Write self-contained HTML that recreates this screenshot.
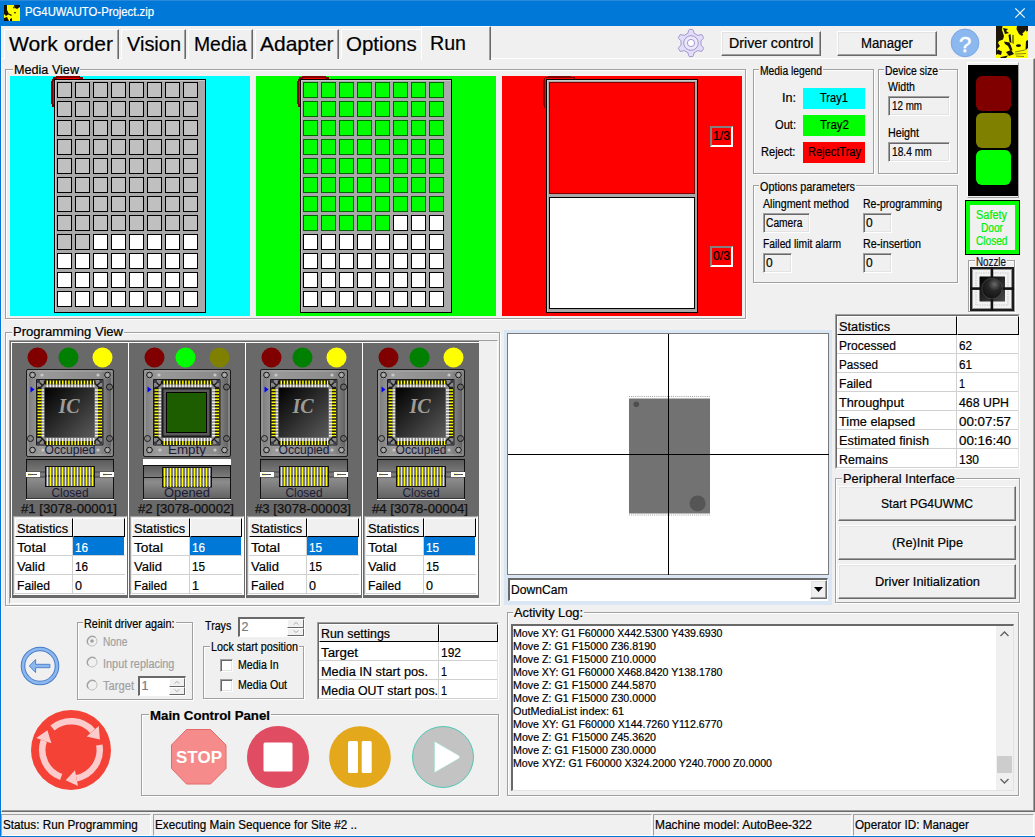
<!DOCTYPE html><html><head><meta charset="utf-8"><style>
html,body{margin:0;padding:0;}
body{width:1035px;height:837px;overflow:hidden;position:relative;background:#f0f0f0;font-family:"Liberation Sans",sans-serif;}
body>div{position:absolute;-webkit-text-stroke:0.2px currentColor;}
</style></head><body>
<div style="left:0px;top:0px;width:1035px;height:26px;background:#0078d7"></div>
<div style="left:0px;top:26px;width:1px;height:811px;background:#0078d7"></div>
<div style="left:0px;top:836px;width:1035px;height:1px;background:#0078d7"></div>
<svg style="position:absolute;left:4px;top:5px;" width="16" height="16" viewBox="0 0 16 16"><rect width="16" height="16" fill="#ffff00"/><path d="M0 0 L3 0 L3 5 L5 9 L2 11 L0 9Z M10 0 L16 0 L16 2 L13 4 L11 3Z M0 13 L3 12 L5 16 L0 16Z M4 8 L8 10 L7 11 L4 9Z M10 7 L12 7 L11 9Z M6 14 L8 13 L8 16 L6 16Z M9 2 L11 1 L10 4Z" fill="#1a1000"/></svg>
<div style="left:25.00px;top:5.44px;font-size:12px;line-height:14.40px;color:#fff;font-weight:400;white-space:nowrap;transform-origin:0 0;transform:scaleX(0.9437);">PG4UWAUTO-Project.zip</div>
<svg style="position:absolute;left:1013px;top:6px;" width="14" height="14" viewBox="0 0 14 14"><path d="M2.3 2.3 L11.7 11.7 M11.7 2.3 L2.3 11.7" stroke="#fff" stroke-width="1.2"/></svg>
<div style="left:0px;top:0px;width:1035px;height:1px;background:#2a88da"></div>
<div style="left:1px;top:58px;width:1034px;height:754px;background:#f0f0f0;border-top:1px solid #fff;border-left:1px solid #fff;border-right:1px solid #696969;border-bottom:1px solid #696969;box-sizing:border-box;box-shadow:inset -1px -1px 0 #a0a0a0"></div>
<div style="left:4px;top:29px;width:115px;height:30px;background:#f0f0f0;border-top:1px solid #fff;border-left:1px solid #fff;border-right:1px solid #696969;box-sizing:border-box;box-shadow:inset -1px 0 0 #a0a0a0"></div>
<div style="left:9.00px;top:31.14px;font-size:21px;line-height:25.20px;color:#000;font-weight:400;white-space:nowrap;transform-origin:0 0;transform:scaleX(1.0052);">Work order</div>
<div style="left:121px;top:29px;width:65px;height:30px;background:#f0f0f0;border-top:1px solid #fff;border-left:1px solid #fff;border-right:1px solid #696969;box-sizing:border-box;box-shadow:inset -1px 0 0 #a0a0a0"></div>
<div style="left:126.70px;top:31.14px;font-size:21px;line-height:25.20px;color:#000;font-weight:400;white-space:nowrap;transform-origin:0 0;transform:scaleX(0.9505);">Vision</div>
<div style="left:188px;top:29px;width:65px;height:30px;background:#f0f0f0;border-top:1px solid #fff;border-left:1px solid #fff;border-right:1px solid #696969;box-sizing:border-box;box-shadow:inset -1px 0 0 #a0a0a0"></div>
<div style="left:194.00px;top:31.14px;font-size:21px;line-height:25.20px;color:#000;font-weight:400;white-space:nowrap;transform-origin:0 0;transform:scaleX(0.9215);">Media</div>
<div style="left:255px;top:29px;width:84px;height:30px;background:#f0f0f0;border-top:1px solid #fff;border-left:1px solid #fff;border-right:1px solid #696969;box-sizing:border-box;box-shadow:inset -1px 0 0 #a0a0a0"></div>
<div style="left:260.00px;top:31.14px;font-size:21px;line-height:25.20px;color:#000;font-weight:400;white-space:nowrap;transform-origin:0 0;">Adapter</div>
<div style="left:341px;top:29px;width:82px;height:30px;background:#f0f0f0;border-top:1px solid #fff;border-left:1px solid #fff;box-sizing:border-box"></div>
<div style="left:346.00px;top:31.14px;font-size:21px;line-height:25.20px;color:#000;font-weight:400;white-space:nowrap;transform-origin:0 0;transform:scaleX(0.9770);">Options</div>
<div style="left:421px;top:26px;width:70px;height:34px;background:#f0f0f0;border-top:1px solid #fff;border-left:1px solid #fff;border-right:1px solid #696969;box-sizing:border-box;box-shadow:inset -1px 0 0 #a0a0a0"></div>
<div style="left:429.60px;top:29.64px;font-size:21px;line-height:25.20px;color:#000;font-weight:400;white-space:nowrap;transform-origin:0 0;transform:scaleX(0.9345);">Run</div>
<svg style="position:absolute;left:676px;top:28px;" width="30" height="30" viewBox="0 0 30 30"><path d="M11.85 5.30 L12.74 2.20 L13.33 1.40 L16.67 1.40 L17.26 2.20 L18.15 5.30 L21.83 7.42 L24.96 6.64 L25.94 6.76 L27.61 9.65 L27.22 10.55 L24.98 12.88 L24.98 17.12 L27.22 19.45 L27.61 20.35 L25.94 23.24 L24.96 23.36 L21.83 22.58 L18.15 24.70 L17.26 27.80 L16.67 28.60 L13.33 28.60 L12.74 27.80 L11.85 24.70 L8.17 22.58 L5.04 23.36 L4.06 23.24 L2.39 20.35 L2.78 19.45 L5.02 17.12 L5.02 12.88 L2.78 10.55 L2.39 9.65 L4.06 6.76 L5.04 6.64 L8.17 7.42Z" fill="#e2ddf8" stroke="#9c8cc8" stroke-width="0.9" stroke-linejoin="round"/><circle cx="15" cy="15" r="7.3" fill="#ece9fb" stroke="#9c8cc8" stroke-width="0.9"/><circle cx="15" cy="15" r="3.6" fill="#fff" stroke="#9c8cc8" stroke-width="0.9"/></svg>
<div style="left:721px;top:31px;width:100px;height:25px;background:#f0f0f0;border-top:1px solid #fff;border-left:1px solid #fff;border-right:1px solid #696969;border-bottom:1px solid #696969;box-sizing:border-box;box-shadow:inset -1px -1px 0 #a0a0a0, inset 1px 1px 0 #e3e3e3"></div>
<div style="left:728.75px;top:34.76px;font-size:14px;line-height:16.80px;color:#000;font-weight:400;white-space:nowrap;transform-origin:0 0;transform:scaleX(1.0152);">Driver control</div>
<div style="left:837px;top:31px;width:100px;height:25px;background:#f0f0f0;border-top:1px solid #fff;border-left:1px solid #fff;border-right:1px solid #696969;border-bottom:1px solid #696969;box-sizing:border-box;box-shadow:inset -1px -1px 0 #a0a0a0, inset 1px 1px 0 #e3e3e3"></div>
<div style="left:861.00px;top:34.76px;font-size:14px;line-height:16.80px;color:#000;font-weight:400;white-space:nowrap;transform-origin:0 0;transform:scaleX(0.9412);">Manager</div>
<svg style="position:absolute;left:950px;top:28px;" width="30" height="30" viewBox="0 0 30 30"><circle cx="15" cy="14.9" r="13.9" fill="#8cb8f0" stroke="#6f9ee0" stroke-width="0.8"/><text x="15.2" y="23.5" font-family="Liberation Sans" font-size="22" fill="#fff" text-anchor="middle" stroke="#fff" stroke-width="0.5">?</text></svg>
<svg style="position:absolute;left:996px;top:26px;" width="32" height="32" viewBox="0 0 32 32"><rect width="32" height="32" fill="#ffff00"/><path d="M0 0 L6.5 0 L6 4 L8 10 L7 13.5 L3 15 L2 17 L4 20 L1 23 L3 27 L0 29Z" fill="#1e1608"/><path d="M21 0 L32 0 L32 5 L29 6 L26 10 L23 8 L20.5 3Z" fill="#1e1608"/><path d="M26 8 L30 4 L31 9Z" fill="#ffff00"/><path d="M7 2 L12 3 L10 5 L13 7 L9 8 L8 5Z" fill="#111"/><path d="M12.5 9 L14.5 8 L15.5 17 L13.5 16Z M16.5 9 L17.5 9 L17.5 18 L16.5 17Z" fill="#111"/><path d="M8 15.5 L13.5 16.5 L15 20 L16.5 24 L14.5 25 L12 20 L9 18Z" fill="#111"/><ellipse cx="22.5" cy="19.6" rx="2.6" ry="1.4" fill="#111"/><path d="M30 15 L32 14 L32 22 L29.5 24Z" fill="#111"/><path d="M10 26 L15 24 L18 28 L13 30Z M2 23.5 L6 25.5 L5 29 L1 28Z M5 31 L12 29.5 L10 32 L4 32Z" fill="#111"/><path d="M19 26 L29 24 M19 28 L30 27.5 M20 30 L28 30.5" stroke="#6a6a20" stroke-width="0.8"/></svg>
<div style="left:6px;top:70px;width:741px;height:250px;border:1px solid #fff;box-sizing:border-box"></div>
<div style="left:5px;top:69px;width:741px;height:250px;border:1px solid #a0a0a0;box-sizing:border-box"></div>
<div style="left:12.5px;top:66px;width:67.0px;height:7px;background:#f0f0f0"></div>
<div style="left:13.50px;top:63.44px;font-size:12px;line-height:14.40px;color:#000;font-weight:400;white-space:nowrap;transform-origin:0 0;transform:scaleX(1.0517);">Media View</div>
<div style="left:10px;top:76px;width:240px;height:240px;background:#00ffff"></div>
<div style="left:256px;top:76px;width:240px;height:240px;background:#00ff00"></div>
<div style="left:502px;top:76px;width:240px;height:240px;background:#ff0000"></div>
<svg style="position:absolute;left:50px;top:75px;" width="34" height="36" viewBox="0 0 34 36"><g shape-rendering="crispEdges"><rect x="6" y="1" width="24" height="1" fill="#800000"/><rect x="3" y="2" width="30" height="2" fill="#800000"/><rect x="7" y="3" width="22" height="1" fill="#ff0000"/><rect x="1" y="6" width="1" height="23" fill="#800000"/><rect x="2" y="4" width="2" height="28" fill="#800000"/><rect x="3" y="6" width="1" height="23" fill="#ff0000"/><rect x="3" y="2" width="1" height="2" fill="#800000"/></g></svg>
<div style="left:54px;top:79px;width:152px;height:234px;background:#a9a9a9;border:1px solid #000;box-sizing:border-box;box-shadow:inset 1px 1px 0 #c8c8c8"></div>
<div style="left:57px;top:82px;width:15px;height:16px;background:#c0c0c0;border:1px solid #000;box-sizing:border-box"></div>
<div style="left:75px;top:82px;width:15px;height:16px;background:#c0c0c0;border:1px solid #000;box-sizing:border-box"></div>
<div style="left:93px;top:82px;width:15px;height:16px;background:#c0c0c0;border:1px solid #000;box-sizing:border-box"></div>
<div style="left:111px;top:82px;width:15px;height:16px;background:#c0c0c0;border:1px solid #000;box-sizing:border-box"></div>
<div style="left:129px;top:82px;width:15px;height:16px;background:#c0c0c0;border:1px solid #000;box-sizing:border-box"></div>
<div style="left:147px;top:82px;width:15px;height:16px;background:#c0c0c0;border:1px solid #000;box-sizing:border-box"></div>
<div style="left:165px;top:82px;width:15px;height:16px;background:#c0c0c0;border:1px solid #000;box-sizing:border-box"></div>
<div style="left:183px;top:82px;width:15px;height:16px;background:#c0c0c0;border:1px solid #000;box-sizing:border-box"></div>
<div style="left:57px;top:101px;width:15px;height:16px;background:#c0c0c0;border:1px solid #000;box-sizing:border-box"></div>
<div style="left:75px;top:101px;width:15px;height:16px;background:#c0c0c0;border:1px solid #000;box-sizing:border-box"></div>
<div style="left:93px;top:101px;width:15px;height:16px;background:#c0c0c0;border:1px solid #000;box-sizing:border-box"></div>
<div style="left:111px;top:101px;width:15px;height:16px;background:#c0c0c0;border:1px solid #000;box-sizing:border-box"></div>
<div style="left:129px;top:101px;width:15px;height:16px;background:#c0c0c0;border:1px solid #000;box-sizing:border-box"></div>
<div style="left:147px;top:101px;width:15px;height:16px;background:#c0c0c0;border:1px solid #000;box-sizing:border-box"></div>
<div style="left:165px;top:101px;width:15px;height:16px;background:#c0c0c0;border:1px solid #000;box-sizing:border-box"></div>
<div style="left:183px;top:101px;width:15px;height:16px;background:#c0c0c0;border:1px solid #000;box-sizing:border-box"></div>
<div style="left:57px;top:120px;width:15px;height:16px;background:#c0c0c0;border:1px solid #000;box-sizing:border-box"></div>
<div style="left:75px;top:120px;width:15px;height:16px;background:#c0c0c0;border:1px solid #000;box-sizing:border-box"></div>
<div style="left:93px;top:120px;width:15px;height:16px;background:#c0c0c0;border:1px solid #000;box-sizing:border-box"></div>
<div style="left:111px;top:120px;width:15px;height:16px;background:#c0c0c0;border:1px solid #000;box-sizing:border-box"></div>
<div style="left:129px;top:120px;width:15px;height:16px;background:#c0c0c0;border:1px solid #000;box-sizing:border-box"></div>
<div style="left:147px;top:120px;width:15px;height:16px;background:#c0c0c0;border:1px solid #000;box-sizing:border-box"></div>
<div style="left:165px;top:120px;width:15px;height:16px;background:#c0c0c0;border:1px solid #000;box-sizing:border-box"></div>
<div style="left:183px;top:120px;width:15px;height:16px;background:#c0c0c0;border:1px solid #000;box-sizing:border-box"></div>
<div style="left:57px;top:139px;width:15px;height:16px;background:#c0c0c0;border:1px solid #000;box-sizing:border-box"></div>
<div style="left:75px;top:139px;width:15px;height:16px;background:#c0c0c0;border:1px solid #000;box-sizing:border-box"></div>
<div style="left:93px;top:139px;width:15px;height:16px;background:#c0c0c0;border:1px solid #000;box-sizing:border-box"></div>
<div style="left:111px;top:139px;width:15px;height:16px;background:#c0c0c0;border:1px solid #000;box-sizing:border-box"></div>
<div style="left:129px;top:139px;width:15px;height:16px;background:#c0c0c0;border:1px solid #000;box-sizing:border-box"></div>
<div style="left:147px;top:139px;width:15px;height:16px;background:#c0c0c0;border:1px solid #000;box-sizing:border-box"></div>
<div style="left:165px;top:139px;width:15px;height:16px;background:#c0c0c0;border:1px solid #000;box-sizing:border-box"></div>
<div style="left:183px;top:139px;width:15px;height:16px;background:#c0c0c0;border:1px solid #000;box-sizing:border-box"></div>
<div style="left:57px;top:158px;width:15px;height:16px;background:#c0c0c0;border:1px solid #000;box-sizing:border-box"></div>
<div style="left:75px;top:158px;width:15px;height:16px;background:#c0c0c0;border:1px solid #000;box-sizing:border-box"></div>
<div style="left:93px;top:158px;width:15px;height:16px;background:#c0c0c0;border:1px solid #000;box-sizing:border-box"></div>
<div style="left:111px;top:158px;width:15px;height:16px;background:#c0c0c0;border:1px solid #000;box-sizing:border-box"></div>
<div style="left:129px;top:158px;width:15px;height:16px;background:#c0c0c0;border:1px solid #000;box-sizing:border-box"></div>
<div style="left:147px;top:158px;width:15px;height:16px;background:#c0c0c0;border:1px solid #000;box-sizing:border-box"></div>
<div style="left:165px;top:158px;width:15px;height:16px;background:#c0c0c0;border:1px solid #000;box-sizing:border-box"></div>
<div style="left:183px;top:158px;width:15px;height:16px;background:#c0c0c0;border:1px solid #000;box-sizing:border-box"></div>
<div style="left:57px;top:177px;width:15px;height:16px;background:#c0c0c0;border:1px solid #000;box-sizing:border-box"></div>
<div style="left:75px;top:177px;width:15px;height:16px;background:#c0c0c0;border:1px solid #000;box-sizing:border-box"></div>
<div style="left:93px;top:177px;width:15px;height:16px;background:#c0c0c0;border:1px solid #000;box-sizing:border-box"></div>
<div style="left:111px;top:177px;width:15px;height:16px;background:#c0c0c0;border:1px solid #000;box-sizing:border-box"></div>
<div style="left:129px;top:177px;width:15px;height:16px;background:#c0c0c0;border:1px solid #000;box-sizing:border-box"></div>
<div style="left:147px;top:177px;width:15px;height:16px;background:#c0c0c0;border:1px solid #000;box-sizing:border-box"></div>
<div style="left:165px;top:177px;width:15px;height:16px;background:#c0c0c0;border:1px solid #000;box-sizing:border-box"></div>
<div style="left:183px;top:177px;width:15px;height:16px;background:#c0c0c0;border:1px solid #000;box-sizing:border-box"></div>
<div style="left:57px;top:196px;width:15px;height:16px;background:#c0c0c0;border:1px solid #000;box-sizing:border-box"></div>
<div style="left:75px;top:196px;width:15px;height:16px;background:#c0c0c0;border:1px solid #000;box-sizing:border-box"></div>
<div style="left:93px;top:196px;width:15px;height:16px;background:#c0c0c0;border:1px solid #000;box-sizing:border-box"></div>
<div style="left:111px;top:196px;width:15px;height:16px;background:#c0c0c0;border:1px solid #000;box-sizing:border-box"></div>
<div style="left:129px;top:196px;width:15px;height:16px;background:#c0c0c0;border:1px solid #000;box-sizing:border-box"></div>
<div style="left:147px;top:196px;width:15px;height:16px;background:#c0c0c0;border:1px solid #000;box-sizing:border-box"></div>
<div style="left:165px;top:196px;width:15px;height:16px;background:#c0c0c0;border:1px solid #000;box-sizing:border-box"></div>
<div style="left:183px;top:196px;width:15px;height:16px;background:#c0c0c0;border:1px solid #000;box-sizing:border-box"></div>
<div style="left:57px;top:215px;width:15px;height:16px;background:#c0c0c0;border:1px solid #000;box-sizing:border-box"></div>
<div style="left:75px;top:215px;width:15px;height:16px;background:#c0c0c0;border:1px solid #000;box-sizing:border-box"></div>
<div style="left:93px;top:215px;width:15px;height:16px;background:#c0c0c0;border:1px solid #000;box-sizing:border-box"></div>
<div style="left:111px;top:215px;width:15px;height:16px;background:#c0c0c0;border:1px solid #000;box-sizing:border-box"></div>
<div style="left:129px;top:215px;width:15px;height:16px;background:#c0c0c0;border:1px solid #000;box-sizing:border-box"></div>
<div style="left:147px;top:215px;width:15px;height:16px;background:#c0c0c0;border:1px solid #000;box-sizing:border-box"></div>
<div style="left:165px;top:215px;width:15px;height:16px;background:#c0c0c0;border:1px solid #000;box-sizing:border-box"></div>
<div style="left:183px;top:215px;width:15px;height:16px;background:#c0c0c0;border:1px solid #000;box-sizing:border-box"></div>
<div style="left:57px;top:234px;width:15px;height:16px;background:#c0c0c0;border:1px solid #000;box-sizing:border-box"></div>
<div style="left:75px;top:234px;width:15px;height:16px;background:#c0c0c0;border:1px solid #000;box-sizing:border-box"></div>
<div style="left:93px;top:234px;width:15px;height:16px;background:#fff;border:1px solid #000;box-sizing:border-box"></div>
<div style="left:111px;top:234px;width:15px;height:16px;background:#fff;border:1px solid #000;box-sizing:border-box"></div>
<div style="left:129px;top:234px;width:15px;height:16px;background:#fff;border:1px solid #000;box-sizing:border-box"></div>
<div style="left:147px;top:234px;width:15px;height:16px;background:#fff;border:1px solid #000;box-sizing:border-box"></div>
<div style="left:165px;top:234px;width:15px;height:16px;background:#fff;border:1px solid #000;box-sizing:border-box"></div>
<div style="left:183px;top:234px;width:15px;height:16px;background:#fff;border:1px solid #000;box-sizing:border-box"></div>
<div style="left:57px;top:253px;width:15px;height:16px;background:#fff;border:1px solid #000;box-sizing:border-box"></div>
<div style="left:75px;top:253px;width:15px;height:16px;background:#fff;border:1px solid #000;box-sizing:border-box"></div>
<div style="left:93px;top:253px;width:15px;height:16px;background:#fff;border:1px solid #000;box-sizing:border-box"></div>
<div style="left:111px;top:253px;width:15px;height:16px;background:#fff;border:1px solid #000;box-sizing:border-box"></div>
<div style="left:129px;top:253px;width:15px;height:16px;background:#fff;border:1px solid #000;box-sizing:border-box"></div>
<div style="left:147px;top:253px;width:15px;height:16px;background:#fff;border:1px solid #000;box-sizing:border-box"></div>
<div style="left:165px;top:253px;width:15px;height:16px;background:#fff;border:1px solid #000;box-sizing:border-box"></div>
<div style="left:183px;top:253px;width:15px;height:16px;background:#fff;border:1px solid #000;box-sizing:border-box"></div>
<div style="left:57px;top:272px;width:15px;height:16px;background:#fff;border:1px solid #000;box-sizing:border-box"></div>
<div style="left:75px;top:272px;width:15px;height:16px;background:#fff;border:1px solid #000;box-sizing:border-box"></div>
<div style="left:93px;top:272px;width:15px;height:16px;background:#fff;border:1px solid #000;box-sizing:border-box"></div>
<div style="left:111px;top:272px;width:15px;height:16px;background:#fff;border:1px solid #000;box-sizing:border-box"></div>
<div style="left:129px;top:272px;width:15px;height:16px;background:#fff;border:1px solid #000;box-sizing:border-box"></div>
<div style="left:147px;top:272px;width:15px;height:16px;background:#fff;border:1px solid #000;box-sizing:border-box"></div>
<div style="left:165px;top:272px;width:15px;height:16px;background:#fff;border:1px solid #000;box-sizing:border-box"></div>
<div style="left:183px;top:272px;width:15px;height:16px;background:#fff;border:1px solid #000;box-sizing:border-box"></div>
<div style="left:57px;top:291px;width:15px;height:16px;background:#fff;border:1px solid #000;box-sizing:border-box"></div>
<div style="left:75px;top:291px;width:15px;height:16px;background:#fff;border:1px solid #000;box-sizing:border-box"></div>
<div style="left:93px;top:291px;width:15px;height:16px;background:#fff;border:1px solid #000;box-sizing:border-box"></div>
<div style="left:111px;top:291px;width:15px;height:16px;background:#fff;border:1px solid #000;box-sizing:border-box"></div>
<div style="left:129px;top:291px;width:15px;height:16px;background:#fff;border:1px solid #000;box-sizing:border-box"></div>
<div style="left:147px;top:291px;width:15px;height:16px;background:#fff;border:1px solid #000;box-sizing:border-box"></div>
<div style="left:165px;top:291px;width:15px;height:16px;background:#fff;border:1px solid #000;box-sizing:border-box"></div>
<div style="left:183px;top:291px;width:15px;height:16px;background:#fff;border:1px solid #000;box-sizing:border-box"></div>
<svg style="position:absolute;left:296px;top:75px;" width="34" height="36" viewBox="0 0 34 36"><g shape-rendering="crispEdges"><rect x="6" y="1" width="24" height="1" fill="#800000"/><rect x="3" y="2" width="30" height="2" fill="#800000"/><rect x="7" y="3" width="22" height="1" fill="#ff0000"/><rect x="1" y="6" width="1" height="23" fill="#800000"/><rect x="2" y="4" width="2" height="28" fill="#800000"/><rect x="3" y="6" width="1" height="23" fill="#ff0000"/><rect x="3" y="2" width="1" height="2" fill="#800000"/></g></svg>
<div style="left:300px;top:79px;width:152px;height:234px;background:#a9a9a9;border:1px solid #000;box-sizing:border-box;box-shadow:inset 1px 1px 0 #c8c8c8"></div>
<div style="left:303px;top:82px;width:15px;height:16px;background:#00ff00;border:1px solid #006400;box-sizing:border-box"></div>
<div style="left:321px;top:82px;width:15px;height:16px;background:#00ff00;border:1px solid #006400;box-sizing:border-box"></div>
<div style="left:339px;top:82px;width:15px;height:16px;background:#00ff00;border:1px solid #006400;box-sizing:border-box"></div>
<div style="left:357px;top:82px;width:15px;height:16px;background:#00ff00;border:1px solid #006400;box-sizing:border-box"></div>
<div style="left:375px;top:82px;width:15px;height:16px;background:#00ff00;border:1px solid #006400;box-sizing:border-box"></div>
<div style="left:393px;top:82px;width:15px;height:16px;background:#00ff00;border:1px solid #006400;box-sizing:border-box"></div>
<div style="left:411px;top:82px;width:15px;height:16px;background:#00ff00;border:1px solid #006400;box-sizing:border-box"></div>
<div style="left:429px;top:82px;width:15px;height:16px;background:#00ff00;border:1px solid #006400;box-sizing:border-box"></div>
<div style="left:303px;top:101px;width:15px;height:16px;background:#00ff00;border:1px solid #006400;box-sizing:border-box"></div>
<div style="left:321px;top:101px;width:15px;height:16px;background:#00ff00;border:1px solid #006400;box-sizing:border-box"></div>
<div style="left:339px;top:101px;width:15px;height:16px;background:#00ff00;border:1px solid #006400;box-sizing:border-box"></div>
<div style="left:357px;top:101px;width:15px;height:16px;background:#00ff00;border:1px solid #006400;box-sizing:border-box"></div>
<div style="left:375px;top:101px;width:15px;height:16px;background:#00ff00;border:1px solid #006400;box-sizing:border-box"></div>
<div style="left:393px;top:101px;width:15px;height:16px;background:#00ff00;border:1px solid #006400;box-sizing:border-box"></div>
<div style="left:411px;top:101px;width:15px;height:16px;background:#00ff00;border:1px solid #006400;box-sizing:border-box"></div>
<div style="left:429px;top:101px;width:15px;height:16px;background:#00ff00;border:1px solid #006400;box-sizing:border-box"></div>
<div style="left:303px;top:120px;width:15px;height:16px;background:#00ff00;border:1px solid #006400;box-sizing:border-box"></div>
<div style="left:321px;top:120px;width:15px;height:16px;background:#00ff00;border:1px solid #006400;box-sizing:border-box"></div>
<div style="left:339px;top:120px;width:15px;height:16px;background:#00ff00;border:1px solid #006400;box-sizing:border-box"></div>
<div style="left:357px;top:120px;width:15px;height:16px;background:#00ff00;border:1px solid #006400;box-sizing:border-box"></div>
<div style="left:375px;top:120px;width:15px;height:16px;background:#00ff00;border:1px solid #006400;box-sizing:border-box"></div>
<div style="left:393px;top:120px;width:15px;height:16px;background:#00ff00;border:1px solid #006400;box-sizing:border-box"></div>
<div style="left:411px;top:120px;width:15px;height:16px;background:#00ff00;border:1px solid #006400;box-sizing:border-box"></div>
<div style="left:429px;top:120px;width:15px;height:16px;background:#00ff00;border:1px solid #006400;box-sizing:border-box"></div>
<div style="left:303px;top:139px;width:15px;height:16px;background:#00ff00;border:1px solid #006400;box-sizing:border-box"></div>
<div style="left:321px;top:139px;width:15px;height:16px;background:#00ff00;border:1px solid #006400;box-sizing:border-box"></div>
<div style="left:339px;top:139px;width:15px;height:16px;background:#00ff00;border:1px solid #006400;box-sizing:border-box"></div>
<div style="left:357px;top:139px;width:15px;height:16px;background:#00ff00;border:1px solid #006400;box-sizing:border-box"></div>
<div style="left:375px;top:139px;width:15px;height:16px;background:#00ff00;border:1px solid #006400;box-sizing:border-box"></div>
<div style="left:393px;top:139px;width:15px;height:16px;background:#00ff00;border:1px solid #006400;box-sizing:border-box"></div>
<div style="left:411px;top:139px;width:15px;height:16px;background:#00ff00;border:1px solid #006400;box-sizing:border-box"></div>
<div style="left:429px;top:139px;width:15px;height:16px;background:#00ff00;border:1px solid #006400;box-sizing:border-box"></div>
<div style="left:303px;top:158px;width:15px;height:16px;background:#00ff00;border:1px solid #006400;box-sizing:border-box"></div>
<div style="left:321px;top:158px;width:15px;height:16px;background:#00ff00;border:1px solid #006400;box-sizing:border-box"></div>
<div style="left:339px;top:158px;width:15px;height:16px;background:#00ff00;border:1px solid #006400;box-sizing:border-box"></div>
<div style="left:357px;top:158px;width:15px;height:16px;background:#00ff00;border:1px solid #006400;box-sizing:border-box"></div>
<div style="left:375px;top:158px;width:15px;height:16px;background:#00ff00;border:1px solid #006400;box-sizing:border-box"></div>
<div style="left:393px;top:158px;width:15px;height:16px;background:#00ff00;border:1px solid #006400;box-sizing:border-box"></div>
<div style="left:411px;top:158px;width:15px;height:16px;background:#00ff00;border:1px solid #006400;box-sizing:border-box"></div>
<div style="left:429px;top:158px;width:15px;height:16px;background:#00ff00;border:1px solid #006400;box-sizing:border-box"></div>
<div style="left:303px;top:177px;width:15px;height:16px;background:#00ff00;border:1px solid #006400;box-sizing:border-box"></div>
<div style="left:321px;top:177px;width:15px;height:16px;background:#00ff00;border:1px solid #006400;box-sizing:border-box"></div>
<div style="left:339px;top:177px;width:15px;height:16px;background:#00ff00;border:1px solid #006400;box-sizing:border-box"></div>
<div style="left:357px;top:177px;width:15px;height:16px;background:#00ff00;border:1px solid #006400;box-sizing:border-box"></div>
<div style="left:375px;top:177px;width:15px;height:16px;background:#00ff00;border:1px solid #006400;box-sizing:border-box"></div>
<div style="left:393px;top:177px;width:15px;height:16px;background:#00ff00;border:1px solid #006400;box-sizing:border-box"></div>
<div style="left:411px;top:177px;width:15px;height:16px;background:#00ff00;border:1px solid #006400;box-sizing:border-box"></div>
<div style="left:429px;top:177px;width:15px;height:16px;background:#00ff00;border:1px solid #006400;box-sizing:border-box"></div>
<div style="left:303px;top:196px;width:15px;height:16px;background:#00ff00;border:1px solid #006400;box-sizing:border-box"></div>
<div style="left:321px;top:196px;width:15px;height:16px;background:#00ff00;border:1px solid #006400;box-sizing:border-box"></div>
<div style="left:339px;top:196px;width:15px;height:16px;background:#00ff00;border:1px solid #006400;box-sizing:border-box"></div>
<div style="left:357px;top:196px;width:15px;height:16px;background:#00ff00;border:1px solid #006400;box-sizing:border-box"></div>
<div style="left:375px;top:196px;width:15px;height:16px;background:#00ff00;border:1px solid #006400;box-sizing:border-box"></div>
<div style="left:393px;top:196px;width:15px;height:16px;background:#00ff00;border:1px solid #006400;box-sizing:border-box"></div>
<div style="left:411px;top:196px;width:15px;height:16px;background:#00ff00;border:1px solid #006400;box-sizing:border-box"></div>
<div style="left:429px;top:196px;width:15px;height:16px;background:#00ff00;border:1px solid #006400;box-sizing:border-box"></div>
<div style="left:303px;top:215px;width:15px;height:16px;background:#00ff00;border:1px solid #006400;box-sizing:border-box"></div>
<div style="left:321px;top:215px;width:15px;height:16px;background:#00ff00;border:1px solid #006400;box-sizing:border-box"></div>
<div style="left:339px;top:215px;width:15px;height:16px;background:#00ff00;border:1px solid #006400;box-sizing:border-box"></div>
<div style="left:357px;top:215px;width:15px;height:16px;background:#00ff00;border:1px solid #006400;box-sizing:border-box"></div>
<div style="left:375px;top:215px;width:15px;height:16px;background:#00ff00;border:1px solid #006400;box-sizing:border-box"></div>
<div style="left:393px;top:215px;width:15px;height:16px;background:#fff;border:1px solid #000;box-sizing:border-box"></div>
<div style="left:411px;top:215px;width:15px;height:16px;background:#fff;border:1px solid #000;box-sizing:border-box"></div>
<div style="left:429px;top:215px;width:15px;height:16px;background:#fff;border:1px solid #000;box-sizing:border-box"></div>
<div style="left:303px;top:234px;width:15px;height:16px;background:#fff;border:1px solid #000;box-sizing:border-box"></div>
<div style="left:321px;top:234px;width:15px;height:16px;background:#fff;border:1px solid #000;box-sizing:border-box"></div>
<div style="left:339px;top:234px;width:15px;height:16px;background:#fff;border:1px solid #000;box-sizing:border-box"></div>
<div style="left:357px;top:234px;width:15px;height:16px;background:#fff;border:1px solid #000;box-sizing:border-box"></div>
<div style="left:375px;top:234px;width:15px;height:16px;background:#fff;border:1px solid #000;box-sizing:border-box"></div>
<div style="left:393px;top:234px;width:15px;height:16px;background:#fff;border:1px solid #000;box-sizing:border-box"></div>
<div style="left:411px;top:234px;width:15px;height:16px;background:#fff;border:1px solid #000;box-sizing:border-box"></div>
<div style="left:429px;top:234px;width:15px;height:16px;background:#fff;border:1px solid #000;box-sizing:border-box"></div>
<div style="left:303px;top:253px;width:15px;height:16px;background:#fff;border:1px solid #000;box-sizing:border-box"></div>
<div style="left:321px;top:253px;width:15px;height:16px;background:#fff;border:1px solid #000;box-sizing:border-box"></div>
<div style="left:339px;top:253px;width:15px;height:16px;background:#fff;border:1px solid #000;box-sizing:border-box"></div>
<div style="left:357px;top:253px;width:15px;height:16px;background:#fff;border:1px solid #000;box-sizing:border-box"></div>
<div style="left:375px;top:253px;width:15px;height:16px;background:#fff;border:1px solid #000;box-sizing:border-box"></div>
<div style="left:393px;top:253px;width:15px;height:16px;background:#fff;border:1px solid #000;box-sizing:border-box"></div>
<div style="left:411px;top:253px;width:15px;height:16px;background:#fff;border:1px solid #000;box-sizing:border-box"></div>
<div style="left:429px;top:253px;width:15px;height:16px;background:#fff;border:1px solid #000;box-sizing:border-box"></div>
<div style="left:303px;top:272px;width:15px;height:16px;background:#fff;border:1px solid #000;box-sizing:border-box"></div>
<div style="left:321px;top:272px;width:15px;height:16px;background:#fff;border:1px solid #000;box-sizing:border-box"></div>
<div style="left:339px;top:272px;width:15px;height:16px;background:#fff;border:1px solid #000;box-sizing:border-box"></div>
<div style="left:357px;top:272px;width:15px;height:16px;background:#fff;border:1px solid #000;box-sizing:border-box"></div>
<div style="left:375px;top:272px;width:15px;height:16px;background:#fff;border:1px solid #000;box-sizing:border-box"></div>
<div style="left:393px;top:272px;width:15px;height:16px;background:#fff;border:1px solid #000;box-sizing:border-box"></div>
<div style="left:411px;top:272px;width:15px;height:16px;background:#fff;border:1px solid #000;box-sizing:border-box"></div>
<div style="left:429px;top:272px;width:15px;height:16px;background:#fff;border:1px solid #000;box-sizing:border-box"></div>
<div style="left:303px;top:291px;width:15px;height:16px;background:#fff;border:1px solid #000;box-sizing:border-box"></div>
<div style="left:321px;top:291px;width:15px;height:16px;background:#fff;border:1px solid #000;box-sizing:border-box"></div>
<div style="left:339px;top:291px;width:15px;height:16px;background:#fff;border:1px solid #000;box-sizing:border-box"></div>
<div style="left:357px;top:291px;width:15px;height:16px;background:#fff;border:1px solid #000;box-sizing:border-box"></div>
<div style="left:375px;top:291px;width:15px;height:16px;background:#fff;border:1px solid #000;box-sizing:border-box"></div>
<div style="left:393px;top:291px;width:15px;height:16px;background:#fff;border:1px solid #000;box-sizing:border-box"></div>
<div style="left:411px;top:291px;width:15px;height:16px;background:#fff;border:1px solid #000;box-sizing:border-box"></div>
<div style="left:429px;top:291px;width:15px;height:16px;background:#fff;border:1px solid #000;box-sizing:border-box"></div>
<svg style="position:absolute;left:542px;top:75px;" width="34" height="36" viewBox="0 0 34 36"><g shape-rendering="crispEdges" fill="#800000"><rect x="6" y="1" width="23" height="1"/><rect x="3" y="2" width="30" height="1"/><rect x="1" y="5" width="2" height="25"/><rect x="2" y="3" width="1" height="2"/><rect x="2" y="30" width="1" height="3"/><rect x="32" y="3" width="1" height="1"/></g></svg>
<div style="left:546px;top:79px;width:152px;height:234px;background:#a9a9a9;border:1px solid #000;box-sizing:border-box;box-shadow:inset 1px 1px 0 #c8c8c8"></div>
<div style="left:549px;top:82px;width:146px;height:112px;background:#ff0000;border:1px solid #800000;box-sizing:border-box"></div>
<div style="left:549px;top:197px;width:146px;height:112px;background:#fff;border:1px solid #000;box-sizing:border-box"></div>
<div style="left:710px;top:126px;width:23px;height:21px;background:#ff0000;border-top:1px solid #a0a0a0;border-left:1px solid #a0a0a0;border-bottom:1px solid #fff;border-right:1px solid #fff;box-sizing:border-box;box-shadow:inset 1px 1px 0 #696969, inset -1px -1px 0 #e3e3e3"></div>
<div style="left:710px;top:126px;width:23px;height:21px;border-top:2px solid #808080;border-left:2px solid #808080;border-bottom:2px solid #fff;border-right:2px solid #fff;box-sizing:border-box"></div>
<div style="left:713.00px;top:129.44px;font-size:12px;line-height:14.40px;color:#000;font-weight:400;white-space:nowrap;transform-origin:0 0;transform:scaleX(1.0192);">1/3</div>
<div style="left:710px;top:246px;width:23px;height:21px;background:#ff0000;border-top:1px solid #a0a0a0;border-left:1px solid #a0a0a0;border-bottom:1px solid #fff;border-right:1px solid #fff;box-sizing:border-box;box-shadow:inset 1px 1px 0 #696969, inset -1px -1px 0 #e3e3e3"></div>
<div style="left:710px;top:246px;width:23px;height:21px;border-top:2px solid #808080;border-left:2px solid #808080;border-bottom:2px solid #fff;border-right:2px solid #fff;box-sizing:border-box"></div>
<div style="left:713.00px;top:249.44px;font-size:12px;line-height:14.40px;color:#000;font-weight:400;white-space:nowrap;transform-origin:0 0;transform:scaleX(1.0192);">0/3</div>
<div style="left:754px;top:70px;width:121px;height:105px;border:1px solid #fff;box-sizing:border-box"></div>
<div style="left:753px;top:69px;width:121px;height:105px;border:1px solid #a0a0a0;box-sizing:border-box"></div>
<div style="left:759px;top:66px;width:64.0px;height:7px;background:#f0f0f0"></div>
<div style="left:760.00px;top:63.94px;font-size:12px;line-height:14.40px;color:#000;font-weight:400;white-space:nowrap;transform-origin:0 0;transform:scaleX(0.8606);">Media legend</div>
<div style="left:781.50px;top:91.44px;font-size:12px;line-height:14.40px;color:#000;font-weight:400;white-space:nowrap;transform-origin:0 0;transform:scaleX(1.0494);">In:</div>
<div style="left:803px;top:88px;width:62px;height:21px;background:#00ffff"></div>
<div style="left:820.10px;top:91.44px;font-size:12px;line-height:14.40px;color:#000;font-weight:400;white-space:nowrap;transform-origin:0 0;transform:scaleX(0.9197);">Tray1</div>
<div style="left:774.50px;top:118.44px;font-size:12px;line-height:14.40px;color:#000;font-weight:400;white-space:nowrap;transform-origin:0 0;transform:scaleX(0.9262);">Out:</div>
<div style="left:803px;top:115px;width:62px;height:21px;background:#00ff00"></div>
<div style="left:819.50px;top:118.44px;font-size:12px;line-height:14.40px;color:#000;font-weight:400;white-space:nowrap;transform-origin:0 0;transform:scaleX(0.9594);">Tray2</div>
<div style="left:761.10px;top:145.44px;font-size:12px;line-height:14.40px;color:#000;font-weight:400;white-space:nowrap;transform-origin:0 0;transform:scaleX(0.9211);">Reject:</div>
<div style="left:803px;top:142px;width:62px;height:21px;background:#ff0000"></div>
<div style="left:807.50px;top:145.44px;font-size:12px;line-height:14.40px;color:#000;font-weight:400;white-space:nowrap;transform-origin:0 0;transform:scaleX(0.9207);">RejectTray</div>
<div style="left:879px;top:70px;width:80px;height:105px;border:1px solid #fff;box-sizing:border-box"></div>
<div style="left:878px;top:69px;width:80px;height:105px;border:1px solid #a0a0a0;box-sizing:border-box"></div>
<div style="left:884px;top:66px;width:55.0px;height:7px;background:#f0f0f0"></div>
<div style="left:885.00px;top:63.94px;font-size:12px;line-height:14.40px;color:#000;font-weight:400;white-space:nowrap;transform-origin:0 0;transform:scaleX(0.8639);">Device size</div>
<div style="left:888.00px;top:79.94px;font-size:12px;line-height:14.40px;color:#000;font-weight:400;white-space:nowrap;transform-origin:0 0;transform:scaleX(0.8802);">Width</div>
<div style="left:888px;top:96px;width:62px;height:20px;background:#f0f0f0;border-top:1px solid #a0a0a0;border-left:1px solid #a0a0a0;border-bottom:1px solid #fff;border-right:1px solid #fff;box-sizing:border-box;box-shadow:inset 1px 1px 0 #696969, inset -1px -1px 0 #e3e3e3"></div>
<div style="left:891.50px;top:98.94px;font-size:12px;line-height:14.40px;color:#000;font-weight:400;white-space:nowrap;transform-origin:0 0;transform:scaleX(0.8181);">12 mm</div>
<div style="left:887.50px;top:125.94px;font-size:12px;line-height:14.40px;color:#000;font-weight:400;white-space:nowrap;transform-origin:0 0;transform:scaleX(0.8937);">Height</div>
<div style="left:888px;top:142px;width:62px;height:20px;background:#f0f0f0;border-top:1px solid #a0a0a0;border-left:1px solid #a0a0a0;border-bottom:1px solid #fff;border-right:1px solid #fff;box-sizing:border-box;box-shadow:inset 1px 1px 0 #696969, inset -1px -1px 0 #e3e3e3"></div>
<div style="left:891.50px;top:144.94px;font-size:12px;line-height:14.40px;color:#000;font-weight:400;white-space:nowrap;transform-origin:0 0;transform:scaleX(0.8505);">18.4 mm</div>
<div style="left:967px;top:62px;width:52px;height:136px;background:#f0f0f0;border-top:1px solid #fff;border-left:1px solid #fff;border-right:1px solid #a0a0a0;border-bottom:1px solid #a0a0a0;box-sizing:border-box"></div>
<div style="left:968px;top:65px;width:50px;height:131px;background:#000"></div>
<div style="left:976px;top:76px;width:35px;height:35px;background:#800000;border-radius:6px"></div>
<div style="left:976px;top:113px;width:35px;height:35px;background:#808000;border-radius:6px"></div>
<div style="left:976px;top:150px;width:35px;height:35px;background:#00ff00;border-radius:6px"></div>
<div style="left:754px;top:186px;width:205px;height:98px;border:1px solid #fff;box-sizing:border-box"></div>
<div style="left:753px;top:185px;width:205px;height:98px;border:1px solid #a0a0a0;box-sizing:border-box"></div>
<div style="left:759px;top:182px;width:97.0px;height:7px;background:#f0f0f0"></div>
<div style="left:760.00px;top:179.94px;font-size:12px;line-height:14.40px;color:#000;font-weight:400;white-space:nowrap;transform-origin:0 0;transform:scaleX(0.9016);">Options parameters</div>
<div style="left:763.00px;top:196.94px;font-size:12px;line-height:14.40px;color:#000;font-weight:400;white-space:nowrap;transform-origin:0 0;transform:scaleX(0.8892);">Alingment method</div>
<div style="left:763px;top:213px;width:47px;height:20px;background:#f0f0f0;border-top:1px solid #a0a0a0;border-left:1px solid #a0a0a0;border-bottom:1px solid #fff;border-right:1px solid #fff;box-sizing:border-box;box-shadow:inset 1px 1px 0 #696969, inset -1px -1px 0 #e3e3e3"></div>
<div style="left:765.80px;top:215.94px;font-size:12px;line-height:14.40px;color:#000;font-weight:400;white-space:nowrap;transform-origin:0 0;transform:scaleX(0.8529);">Camera</div>
<div style="left:863.00px;top:196.94px;font-size:12px;line-height:14.40px;color:#000;font-weight:400;white-space:nowrap;transform-origin:0 0;transform:scaleX(0.8776);">Re-programming</div>
<div style="left:863px;top:213px;width:29px;height:20px;background:#f0f0f0;border-top:1px solid #a0a0a0;border-left:1px solid #a0a0a0;border-bottom:1px solid #fff;border-right:1px solid #fff;box-sizing:border-box;box-shadow:inset 1px 1px 0 #696969, inset -1px -1px 0 #e3e3e3"></div>
<div style="left:866.00px;top:215.94px;font-size:12px;line-height:14.40px;color:#000;font-weight:400;white-space:nowrap;transform-origin:0 0;">0</div>
<div style="left:763.00px;top:236.94px;font-size:12px;line-height:14.40px;color:#000;font-weight:400;white-space:nowrap;transform-origin:0 0;transform:scaleX(0.8602);">Failed limit alarm</div>
<div style="left:763px;top:253px;width:29px;height:20px;background:#f0f0f0;border-top:1px solid #a0a0a0;border-left:1px solid #a0a0a0;border-bottom:1px solid #fff;border-right:1px solid #fff;box-sizing:border-box;box-shadow:inset 1px 1px 0 #696969, inset -1px -1px 0 #e3e3e3"></div>
<div style="left:766.00px;top:255.94px;font-size:12px;line-height:14.40px;color:#000;font-weight:400;white-space:nowrap;transform-origin:0 0;">0</div>
<div style="left:863.00px;top:236.94px;font-size:12px;line-height:14.40px;color:#000;font-weight:400;white-space:nowrap;transform-origin:0 0;transform:scaleX(0.8966);">Re-insertion</div>
<div style="left:863px;top:253px;width:29px;height:20px;background:#f0f0f0;border-top:1px solid #a0a0a0;border-left:1px solid #a0a0a0;border-bottom:1px solid #fff;border-right:1px solid #fff;box-sizing:border-box;box-shadow:inset 1px 1px 0 #696969, inset -1px -1px 0 #e3e3e3"></div>
<div style="left:866.00px;top:255.94px;font-size:12px;line-height:14.40px;color:#000;font-weight:400;white-space:nowrap;transform-origin:0 0;">0</div>
<div style="left:965px;top:200px;width:55px;height:55px;background:#f0f0f0;border:1px solid #000;box-sizing:border-box;box-shadow:inset 0 0 0 4px #00ff00"></div>
<div style="left:976.00px;top:207.94px;font-size:12px;line-height:14.40px;color:#00ee00;font-weight:400;white-space:nowrap;transform-origin:0 0;transform:scaleX(0.9113);">Safety</div>
<div style="left:980.50px;top:220.94px;font-size:12px;line-height:14.40px;color:#00ee00;font-weight:400;white-space:nowrap;transform-origin:0 0;transform:scaleX(0.8459);">Door</div>
<div style="left:975.75px;top:233.94px;font-size:12px;line-height:14.40px;color:#00ee00;font-weight:400;white-space:nowrap;transform-origin:0 0;transform:scaleX(0.8433);">Closed</div>
<div style="left:969px;top:261px;width:47px;height:52px;border:1px solid #fff;box-sizing:border-box"></div>
<div style="left:968px;top:260px;width:47px;height:52px;border:1px solid #a0a0a0;box-sizing:border-box"></div>
<div style="left:975px;top:256px;width:32px;height:8px;background:#f0f0f0"></div>
<div style="left:976.00px;top:254.64px;font-size:12.5px;line-height:15.00px;color:#101030;font-weight:400;white-space:nowrap;transform-origin:0 0;transform:scaleX(0.7852);">Nozzle</div>
<svg style="position:absolute;left:970px;top:267px;" width="44" height="44" viewBox="0 0 44 44"><defs><radialGradient id="ball" cx="0.62" cy="0.3" r="0.7"><stop offset="0" stop-color="#6a6a6a"/><stop offset="0.45" stop-color="#262626"/><stop offset="1" stop-color="#141414"/></radialGradient><linearGradient id="nsq" x1="0" y1="0" x2="1" y2="1"><stop offset="0" stop-color="#000"/><stop offset="1" stop-color="#4a4a4a"/></linearGradient></defs><rect x="0" y="0" width="44" height="44" fill="#1c1c1c"/><rect x="2.5" y="2.5" width="39" height="39" fill="#f2f2f2" stroke="#9a9a9a" stroke-width="0.8"/><rect x="6" y="6" width="32" height="32" fill="none" stroke="#c4c4c4" stroke-width="1.2" stroke-dasharray="1.2 1.2"/><rect x="9.5" y="9.5" width="25.5" height="25" fill="url(#nsq)" rx="0.5"/><rect x="20.6" y="0" width="2.6" height="44" fill="#111"/><rect x="0" y="20.3" width="44" height="2.6" fill="#111"/><circle cx="22" cy="21.5" r="10.3" fill="url(#ball)" stroke="#6a6a6a" stroke-width="0.4"/></svg>
<div style="left:6px;top:333px;width:495px;height:274px;border:1px solid #fff;box-sizing:border-box"></div>
<div style="left:5px;top:332px;width:495px;height:274px;border:1px solid #a0a0a0;box-sizing:border-box"></div>
<div style="left:12px;top:329px;width:111.99999999999999px;height:7px;background:#f0f0f0"></div>
<div style="left:13.00px;top:324.64px;font-size:12.5px;line-height:15.00px;color:#000;font-weight:400;white-space:nowrap;transform-origin:0 0;transform:scaleX(1.0440);">Programming View</div>
<div style="left:9px;top:340px;width:489px;height:264px;border-top:1px solid #a0a0a0;border-left:1px solid #a0a0a0;border-bottom:1px solid #fff;border-right:1px solid #fff;box-sizing:border-box"></div>
<div style="left:10px;top:341px;width:469px;height:257px;background:#fff;border-top:1px solid #696969;border-left:1px solid #696969;box-sizing:border-box"></div>
<div style="left:12px;top:343px;width:116px;height:255px;background:#696969"></div>
<svg style="position:absolute;left:26.5px;top:346.5px;" width="21" height="21" viewBox="0 0 21 21"><circle cx="10.5" cy="10.5" r="10" fill="#800000"/></svg>
<svg style="position:absolute;left:58.400000000000006px;top:346.5px;" width="21" height="21" viewBox="0 0 21 21"><circle cx="10.5" cy="10.5" r="10" fill="#008000"/></svg>
<svg style="position:absolute;left:92.4px;top:346.5px;" width="21" height="21" viewBox="0 0 21 21"><circle cx="10.5" cy="10.5" r="10" fill="#ffff00"/></svg>
<svg style="position:absolute;left:26px;top:369px;" width="88" height="88" viewBox="0 0 88 88"><defs><linearGradient id="sg" x1="0" y1="0" x2="1" y2="0"><stop offset="0" stop-color="#7a7a7a"/><stop offset="0.15" stop-color="#9a9a9a"/><stop offset="0.85" stop-color="#8a8a8a"/><stop offset="1" stop-color="#5a5a5a"/></linearGradient><linearGradient id="ic" x1="0" y1="0" x2="1" y2="1"><stop offset="0" stop-color="#000"/><stop offset="1" stop-color="#5a5a5a"/></linearGradient></defs><rect x="0.5" y="0.5" width="87" height="87" rx="1.5" fill="url(#sg)" stroke="#1a1a1a" stroke-width="1"/><rect x="2" y="2" width="84" height="84" fill="none" stroke="#a8a8a8" stroke-width="1"/><circle cx="6.5" cy="6" r="3.6" fill="#c0c0c0"/><circle cx="6.5" cy="6" r="2.9" fill="#9a9a9a" stroke="#111" stroke-width="1"/><circle cx="6.5" cy="6" r="1.1" fill="#b8b8b8"/><circle cx="81.5" cy="6" r="3.6" fill="#c0c0c0"/><circle cx="81.5" cy="6" r="2.9" fill="#9a9a9a" stroke="#111" stroke-width="1"/><circle cx="81.5" cy="6" r="1.1" fill="#b8b8b8"/><circle cx="6.5" cy="81" r="3.6" fill="#c0c0c0"/><circle cx="6.5" cy="81" r="2.9" fill="#9a9a9a" stroke="#111" stroke-width="1"/><circle cx="6.5" cy="81" r="1.1" fill="#b8b8b8"/><circle cx="81.5" cy="81" r="3.6" fill="#c0c0c0"/><circle cx="81.5" cy="81" r="2.9" fill="#9a9a9a" stroke="#111" stroke-width="1"/><circle cx="81.5" cy="81" r="1.1" fill="#b8b8b8"/><circle cx="16" cy="6" r="1.6" fill="#c8c8c8"/><circle cx="72" cy="6" r="1.6" fill="#c8c8c8"/><circle cx="17" cy="81" r="1.6" fill="#c8c8c8"/><circle cx="72" cy="81" r="1.6" fill="#c8c8c8"/><circle cx="83.5" cy="18" r="3" fill="none" stroke="#111" stroke-width="0.9"/><circle cx="83.5" cy="69.5" r="3" fill="none" stroke="#111" stroke-width="0.9"/><circle cx="4.5" cy="69.5" r="3" fill="none" stroke="#111" stroke-width="0.9"/><path d="M4.5 17.5 L8.5 20.5 L4.5 23.5Z" fill="#0000ff"/><rect x="10" y="10.5" width="67.5" height="66" fill="#8a8a8a"/><rect x="19" y="11" width="50" height="4.5" fill="#1a1a1a"/><rect x="19" y="72" width="50" height="4.5" fill="#1a1a1a"/><rect x="11" y="19" width="4.5" height="50" fill="#1a1a1a"/><rect x="72" y="19" width="4.5" height="50" fill="#1a1a1a"/><path d="M10.5 10.5 L77 10.5 M10.5 10.5 L10.5 76 M77 10.5 L77 76 M10.5 76 L77 76" stroke="#1a1a1a" stroke-width="1" fill="none"/><rect x="20.50" y="11.5" width="1.5" height="4" fill="#ffff00"/><rect x="20.50" y="15.5" width="1.5" height="3" fill="#f0f0f0"/><rect x="20.50" y="72" width="1.5" height="4" fill="#ffff00"/><rect x="20.50" y="69" width="1.5" height="3" fill="#f0f0f0"/><rect x="23.60" y="11.5" width="1.5" height="4" fill="#ffff00"/><rect x="23.60" y="15.5" width="1.5" height="3" fill="#f0f0f0"/><rect x="23.60" y="72" width="1.5" height="4" fill="#ffff00"/><rect x="23.60" y="69" width="1.5" height="3" fill="#f0f0f0"/><rect x="26.70" y="11.5" width="1.5" height="4" fill="#ffff00"/><rect x="26.70" y="15.5" width="1.5" height="3" fill="#f0f0f0"/><rect x="26.70" y="72" width="1.5" height="4" fill="#ffff00"/><rect x="26.70" y="69" width="1.5" height="3" fill="#f0f0f0"/><rect x="29.80" y="11.5" width="1.5" height="4" fill="#ffff00"/><rect x="29.80" y="15.5" width="1.5" height="3" fill="#f0f0f0"/><rect x="29.80" y="72" width="1.5" height="4" fill="#ffff00"/><rect x="29.80" y="69" width="1.5" height="3" fill="#f0f0f0"/><rect x="32.90" y="11.5" width="1.5" height="4" fill="#ffff00"/><rect x="32.90" y="15.5" width="1.5" height="3" fill="#f0f0f0"/><rect x="32.90" y="72" width="1.5" height="4" fill="#ffff00"/><rect x="32.90" y="69" width="1.5" height="3" fill="#f0f0f0"/><rect x="36.00" y="11.5" width="1.5" height="4" fill="#ffff00"/><rect x="36.00" y="15.5" width="1.5" height="3" fill="#f0f0f0"/><rect x="36.00" y="72" width="1.5" height="4" fill="#ffff00"/><rect x="36.00" y="69" width="1.5" height="3" fill="#f0f0f0"/><rect x="39.10" y="11.5" width="1.5" height="4" fill="#ffff00"/><rect x="39.10" y="15.5" width="1.5" height="3" fill="#f0f0f0"/><rect x="39.10" y="72" width="1.5" height="4" fill="#ffff00"/><rect x="39.10" y="69" width="1.5" height="3" fill="#f0f0f0"/><rect x="42.20" y="11.5" width="1.5" height="4" fill="#ffff00"/><rect x="42.20" y="15.5" width="1.5" height="3" fill="#f0f0f0"/><rect x="42.20" y="72" width="1.5" height="4" fill="#ffff00"/><rect x="42.20" y="69" width="1.5" height="3" fill="#f0f0f0"/><rect x="45.30" y="11.5" width="1.5" height="4" fill="#ffff00"/><rect x="45.30" y="15.5" width="1.5" height="3" fill="#f0f0f0"/><rect x="45.30" y="72" width="1.5" height="4" fill="#ffff00"/><rect x="45.30" y="69" width="1.5" height="3" fill="#f0f0f0"/><rect x="48.40" y="11.5" width="1.5" height="4" fill="#ffff00"/><rect x="48.40" y="15.5" width="1.5" height="3" fill="#f0f0f0"/><rect x="48.40" y="72" width="1.5" height="4" fill="#ffff00"/><rect x="48.40" y="69" width="1.5" height="3" fill="#f0f0f0"/><rect x="51.50" y="11.5" width="1.5" height="4" fill="#ffff00"/><rect x="51.50" y="15.5" width="1.5" height="3" fill="#f0f0f0"/><rect x="51.50" y="72" width="1.5" height="4" fill="#ffff00"/><rect x="51.50" y="69" width="1.5" height="3" fill="#f0f0f0"/><rect x="54.60" y="11.5" width="1.5" height="4" fill="#ffff00"/><rect x="54.60" y="15.5" width="1.5" height="3" fill="#f0f0f0"/><rect x="54.60" y="72" width="1.5" height="4" fill="#ffff00"/><rect x="54.60" y="69" width="1.5" height="3" fill="#f0f0f0"/><rect x="57.70" y="11.5" width="1.5" height="4" fill="#ffff00"/><rect x="57.70" y="15.5" width="1.5" height="3" fill="#f0f0f0"/><rect x="57.70" y="72" width="1.5" height="4" fill="#ffff00"/><rect x="57.70" y="69" width="1.5" height="3" fill="#f0f0f0"/><rect x="60.80" y="11.5" width="1.5" height="4" fill="#ffff00"/><rect x="60.80" y="15.5" width="1.5" height="3" fill="#f0f0f0"/><rect x="60.80" y="72" width="1.5" height="4" fill="#ffff00"/><rect x="60.80" y="69" width="1.5" height="3" fill="#f0f0f0"/><rect x="63.90" y="11.5" width="1.5" height="4" fill="#ffff00"/><rect x="63.90" y="15.5" width="1.5" height="3" fill="#f0f0f0"/><rect x="63.90" y="72" width="1.5" height="4" fill="#ffff00"/><rect x="63.90" y="69" width="1.5" height="3" fill="#f0f0f0"/><rect x="67.00" y="11.5" width="1.5" height="4" fill="#ffff00"/><rect x="67.00" y="15.5" width="1.5" height="3" fill="#f0f0f0"/><rect x="67.00" y="72" width="1.5" height="4" fill="#ffff00"/><rect x="67.00" y="69" width="1.5" height="3" fill="#f0f0f0"/><rect x="11.5" y="20.30" width="4" height="1.5" fill="#ffff00"/><rect x="15.5" y="20.30" width="3" height="1.5" fill="#f0f0f0"/><rect x="72" y="20.30" width="4" height="1.5" fill="#ffff00"/><rect x="69" y="20.30" width="3" height="1.5" fill="#f0f0f0"/><rect x="11.5" y="23.35" width="4" height="1.5" fill="#ffff00"/><rect x="15.5" y="23.35" width="3" height="1.5" fill="#f0f0f0"/><rect x="72" y="23.35" width="4" height="1.5" fill="#ffff00"/><rect x="69" y="23.35" width="3" height="1.5" fill="#f0f0f0"/><rect x="11.5" y="26.40" width="4" height="1.5" fill="#ffff00"/><rect x="15.5" y="26.40" width="3" height="1.5" fill="#f0f0f0"/><rect x="72" y="26.40" width="4" height="1.5" fill="#ffff00"/><rect x="69" y="26.40" width="3" height="1.5" fill="#f0f0f0"/><rect x="11.5" y="29.45" width="4" height="1.5" fill="#ffff00"/><rect x="15.5" y="29.45" width="3" height="1.5" fill="#f0f0f0"/><rect x="72" y="29.45" width="4" height="1.5" fill="#ffff00"/><rect x="69" y="29.45" width="3" height="1.5" fill="#f0f0f0"/><rect x="11.5" y="32.50" width="4" height="1.5" fill="#ffff00"/><rect x="15.5" y="32.50" width="3" height="1.5" fill="#f0f0f0"/><rect x="72" y="32.50" width="4" height="1.5" fill="#ffff00"/><rect x="69" y="32.50" width="3" height="1.5" fill="#f0f0f0"/><rect x="11.5" y="35.55" width="4" height="1.5" fill="#ffff00"/><rect x="15.5" y="35.55" width="3" height="1.5" fill="#f0f0f0"/><rect x="72" y="35.55" width="4" height="1.5" fill="#ffff00"/><rect x="69" y="35.55" width="3" height="1.5" fill="#f0f0f0"/><rect x="11.5" y="38.60" width="4" height="1.5" fill="#ffff00"/><rect x="15.5" y="38.60" width="3" height="1.5" fill="#f0f0f0"/><rect x="72" y="38.60" width="4" height="1.5" fill="#ffff00"/><rect x="69" y="38.60" width="3" height="1.5" fill="#f0f0f0"/><rect x="11.5" y="41.65" width="4" height="1.5" fill="#ffff00"/><rect x="15.5" y="41.65" width="3" height="1.5" fill="#f0f0f0"/><rect x="72" y="41.65" width="4" height="1.5" fill="#ffff00"/><rect x="69" y="41.65" width="3" height="1.5" fill="#f0f0f0"/><rect x="11.5" y="44.70" width="4" height="1.5" fill="#ffff00"/><rect x="15.5" y="44.70" width="3" height="1.5" fill="#f0f0f0"/><rect x="72" y="44.70" width="4" height="1.5" fill="#ffff00"/><rect x="69" y="44.70" width="3" height="1.5" fill="#f0f0f0"/><rect x="11.5" y="47.75" width="4" height="1.5" fill="#ffff00"/><rect x="15.5" y="47.75" width="3" height="1.5" fill="#f0f0f0"/><rect x="72" y="47.75" width="4" height="1.5" fill="#ffff00"/><rect x="69" y="47.75" width="3" height="1.5" fill="#f0f0f0"/><rect x="11.5" y="50.80" width="4" height="1.5" fill="#ffff00"/><rect x="15.5" y="50.80" width="3" height="1.5" fill="#f0f0f0"/><rect x="72" y="50.80" width="4" height="1.5" fill="#ffff00"/><rect x="69" y="50.80" width="3" height="1.5" fill="#f0f0f0"/><rect x="11.5" y="53.85" width="4" height="1.5" fill="#ffff00"/><rect x="15.5" y="53.85" width="3" height="1.5" fill="#f0f0f0"/><rect x="72" y="53.85" width="4" height="1.5" fill="#ffff00"/><rect x="69" y="53.85" width="3" height="1.5" fill="#f0f0f0"/><rect x="11.5" y="56.90" width="4" height="1.5" fill="#ffff00"/><rect x="15.5" y="56.90" width="3" height="1.5" fill="#f0f0f0"/><rect x="72" y="56.90" width="4" height="1.5" fill="#ffff00"/><rect x="69" y="56.90" width="3" height="1.5" fill="#f0f0f0"/><rect x="11.5" y="59.95" width="4" height="1.5" fill="#ffff00"/><rect x="15.5" y="59.95" width="3" height="1.5" fill="#f0f0f0"/><rect x="72" y="59.95" width="4" height="1.5" fill="#ffff00"/><rect x="69" y="59.95" width="3" height="1.5" fill="#f0f0f0"/><rect x="11.5" y="63.00" width="4" height="1.5" fill="#ffff00"/><rect x="15.5" y="63.00" width="3" height="1.5" fill="#f0f0f0"/><rect x="72" y="63.00" width="4" height="1.5" fill="#ffff00"/><rect x="69" y="63.00" width="3" height="1.5" fill="#f0f0f0"/><rect x="11.5" y="66.05" width="4" height="1.5" fill="#ffff00"/><rect x="15.5" y="66.05" width="3" height="1.5" fill="#f0f0f0"/><rect x="72" y="66.05" width="4" height="1.5" fill="#ffff00"/><rect x="69" y="66.05" width="3" height="1.5" fill="#f0f0f0"/><path d="M11.5 18.5 L14.5 18.5 L18.5 14.5 L18.5 11.5 M13.5 13.5 L16.5 16.5" stroke="#1a1a1a" stroke-width="1.3" fill="none"/><rect x="11.0" y="11.0" width="3" height="3" fill="#3a3a4a"/><path d="M76 18.5 L73 18.5 L69 14.5 L69 11.5 M74 13.5 L71 16.5" stroke="#1a1a1a" stroke-width="1.3" fill="none"/><rect x="73.5" y="11.0" width="3" height="3" fill="#3a3a4a"/><path d="M11.5 68 L14.5 68 L18.5 72 L18.5 75 M13.5 73 L16.5 70" stroke="#1a1a1a" stroke-width="1.3" fill="none"/><rect x="11.0" y="72.5" width="3" height="3" fill="#3a3a4a"/><path d="M76 68 L73 68 L69 72 L69 75 M74 73 L71 70" stroke="#1a1a1a" stroke-width="1.3" fill="none"/><rect x="73.5" y="72.5" width="3" height="3" fill="#3a3a4a"/><rect x="18.5" y="18.5" width="50" height="50" fill="url(#ic)"/><text x="43" y="44" font-family="Liberation Serif" font-style="italic" font-weight="700" font-size="20" fill="#9e9a94" text-anchor="middle">IC</text><text x="44" y="85" font-family="Liberation Sans" font-size="13" fill="#1a1a3a" text-anchor="middle" textLength="51" lengthAdjust="spacingAndGlyphs">Occupied</text></svg>
<svg style="position:absolute;left:26px;top:459px;" width="88" height="41" viewBox="0 0 88 41"><defs><linearGradient id="lg" x1="0" y1="0" x2="0" y2="1"><stop offset="0" stop-color="#5a5a5a"/><stop offset="0.5" stop-color="#8c8c8c"/><stop offset="1" stop-color="#606060"/></linearGradient></defs><rect x="0.5" y="0.5" width="87" height="39.5" fill="url(#lg)" stroke="#111" stroke-width="1"/><rect x="0" y="40" width="88" height="1" fill="#fff"/><rect x="0.5" y="13" width="87" height="5" fill="#7a7a7a" stroke="#333" stroke-width="0.8"/><rect x="0" y="13" width="14" height="5" fill="#fff"/><path d="M2 14.5 L11 15.5 L2 16.5Z" fill="#e0d000"/><rect x="2" y="15" width="9" height="1" fill="#555"/><rect x="74" y="13" width="14" height="5" fill="#fff"/><path d="M77 14.5 L86 15.5 L77 16.5Z" fill="#e0d000"/><rect x="77" y="15" width="9" height="1" fill="#555"/><rect x="19.5" y="7.5" width="49" height="20" fill="#7c7c84" stroke="#111" stroke-width="1"/><line x1="19.5" y1="17.0" x2="68.5" y2="17.0" stroke="#222" stroke-width="1"/><rect x="21" y="8.0" width="1" height="19" fill="#ffff00" shape-rendering="crispEdges"/><rect x="24" y="8.0" width="1" height="19" fill="#ffff00" shape-rendering="crispEdges"/><rect x="27" y="8.0" width="1" height="19" fill="#ffff00" shape-rendering="crispEdges"/><rect x="30" y="8.0" width="1" height="19" fill="#ffff00" shape-rendering="crispEdges"/><rect x="33" y="8.0" width="1" height="19" fill="#ffff00" shape-rendering="crispEdges"/><rect x="36" y="8.0" width="1" height="19" fill="#ffff00" shape-rendering="crispEdges"/><rect x="39" y="8.0" width="1" height="19" fill="#ffff00" shape-rendering="crispEdges"/><rect x="42" y="8.0" width="1" height="19" fill="#ffff00" shape-rendering="crispEdges"/><rect x="45" y="8.0" width="1" height="19" fill="#ffff00" shape-rendering="crispEdges"/><rect x="48" y="8.0" width="1" height="19" fill="#ffff00" shape-rendering="crispEdges"/><rect x="51" y="8.0" width="1" height="19" fill="#ffff00" shape-rendering="crispEdges"/><rect x="54" y="8.0" width="1" height="19" fill="#ffff00" shape-rendering="crispEdges"/><rect x="57" y="8.0" width="1" height="19" fill="#ffff00" shape-rendering="crispEdges"/><rect x="60" y="8.0" width="1" height="19" fill="#ffff00" shape-rendering="crispEdges"/><rect x="63" y="8.0" width="1" height="19" fill="#ffff00" shape-rendering="crispEdges"/><rect x="66" y="8.0" width="1" height="19" fill="#ffff00" shape-rendering="crispEdges"/><text x="44" y="37.5" font-family="Liberation Sans" font-size="13" fill="#1a1a3a" text-anchor="middle" textLength="37" lengthAdjust="spacingAndGlyphs">Closed</text></svg>
<div style="left:21.00px;top:500.85px;font-size:13px;line-height:15.60px;color:#111;font-weight:400;white-space:nowrap;transform-origin:0 0;transform:scaleX(1.0139);-webkit-text-stroke:0.25px #111;">#1 [3078-00001]</div>
<div style="left:13px;top:516px;width:114px;height:79px;background:#fff;border-top:1px solid #a0a0a0;border-left:1px solid #a0a0a0;border-right:1px solid #fff;border-bottom:1px solid #fff;box-sizing:border-box"></div>
<div style="left:14px;top:517px;width:112px;height:77px;border-top:1px solid #e8e8e8;border-left:1px solid #e8e8e8;box-sizing:border-box"></div>
<div style="left:15px;top:518px;width:58px;height:19px;background:#f0f0f0;border-top:1px solid #fff;border-left:1px solid #fff;border-right:1px solid #000;border-bottom:1px solid #000;box-sizing:border-box"></div>
<div style="left:73px;top:518px;width:52px;height:19px;background:#f0f0f0;border-top:1px solid #fff;border-left:1px solid #fff;border-right:1px solid #000;border-bottom:1px solid #000;box-sizing:border-box"></div>
<div style="left:17.00px;top:521.64px;font-size:12.5px;line-height:15.00px;color:#000;font-weight:400;white-space:nowrap;transform-origin:0 0;transform:scaleX(1.0198);">Statistics</div>
<div style="left:73px;top:537px;width:51px;height:19px;background:#0078d7"></div>
<div style="left:15px;top:555px;width:110px;height:1px;background:#d0d0d0"></div>
<div style="left:72px;top:537px;width:1px;height:19px;background:#d0d0d0"></div>
<div style="left:17.00px;top:541.14px;font-size:12.5px;line-height:15.00px;color:#000;font-weight:400;white-space:nowrap;transform-origin:0 0;transform:scaleX(1.0984);">Total</div>
<div style="left:75.00px;top:541.14px;font-size:12.5px;line-height:15.00px;color:#fff;font-weight:400;white-space:nowrap;transform-origin:0 0;transform:scaleX(0.9351);">16</div>
<div style="left:15px;top:574px;width:110px;height:1px;background:#d0d0d0"></div>
<div style="left:72px;top:556px;width:1px;height:19px;background:#d0d0d0"></div>
<div style="left:17.00px;top:560.14px;font-size:12.5px;line-height:15.00px;color:#000;font-weight:400;white-space:nowrap;transform-origin:0 0;transform:scaleX(1.0422);">Valid</div>
<div style="left:75.00px;top:560.14px;font-size:12.5px;line-height:15.00px;color:#000;font-weight:400;white-space:nowrap;transform-origin:0 0;transform:scaleX(0.9351);">16</div>
<div style="left:15px;top:593px;width:110px;height:1px;background:#d0d0d0"></div>
<div style="left:72px;top:575px;width:1px;height:19px;background:#d0d0d0"></div>
<div style="left:17.00px;top:579.14px;font-size:12.5px;line-height:15.00px;color:#000;font-weight:400;white-space:nowrap;transform-origin:0 0;transform:scaleX(0.9694);">Failed</div>
<div style="left:75.00px;top:579.14px;font-size:12.5px;line-height:15.00px;color:#000;font-weight:400;white-space:nowrap;transform-origin:0 0;transform:scaleX(1.0070);">0</div>
<div style="left:129px;top:343px;width:116px;height:255px;background:#696969"></div>
<svg style="position:absolute;left:143.5px;top:346.5px;" width="21" height="21" viewBox="0 0 21 21"><circle cx="10.5" cy="10.5" r="10" fill="#800000"/></svg>
<svg style="position:absolute;left:175.4px;top:346.5px;" width="21" height="21" viewBox="0 0 21 21"><circle cx="10.5" cy="10.5" r="10" fill="#00ff00"/></svg>
<svg style="position:absolute;left:209.4px;top:346.5px;" width="21" height="21" viewBox="0 0 21 21"><circle cx="10.5" cy="10.5" r="10" fill="#808000"/></svg>
<svg style="position:absolute;left:143px;top:369px;" width="88" height="88" viewBox="0 0 88 88"><defs><linearGradient id="sg" x1="0" y1="0" x2="1" y2="0"><stop offset="0" stop-color="#7a7a7a"/><stop offset="0.15" stop-color="#9a9a9a"/><stop offset="0.85" stop-color="#8a8a8a"/><stop offset="1" stop-color="#5a5a5a"/></linearGradient><linearGradient id="ic" x1="0" y1="0" x2="1" y2="1"><stop offset="0" stop-color="#000"/><stop offset="1" stop-color="#5a5a5a"/></linearGradient></defs><rect x="0.5" y="0.5" width="87" height="87" rx="1.5" fill="url(#sg)" stroke="#1a1a1a" stroke-width="1"/><rect x="2" y="2" width="84" height="84" fill="none" stroke="#a8a8a8" stroke-width="1"/><circle cx="6.5" cy="6" r="3.6" fill="#c0c0c0"/><circle cx="6.5" cy="6" r="2.9" fill="#9a9a9a" stroke="#111" stroke-width="1"/><circle cx="6.5" cy="6" r="1.1" fill="#b8b8b8"/><circle cx="81.5" cy="6" r="3.6" fill="#c0c0c0"/><circle cx="81.5" cy="6" r="2.9" fill="#9a9a9a" stroke="#111" stroke-width="1"/><circle cx="81.5" cy="6" r="1.1" fill="#b8b8b8"/><circle cx="6.5" cy="81" r="3.6" fill="#c0c0c0"/><circle cx="6.5" cy="81" r="2.9" fill="#9a9a9a" stroke="#111" stroke-width="1"/><circle cx="6.5" cy="81" r="1.1" fill="#b8b8b8"/><circle cx="81.5" cy="81" r="3.6" fill="#c0c0c0"/><circle cx="81.5" cy="81" r="2.9" fill="#9a9a9a" stroke="#111" stroke-width="1"/><circle cx="81.5" cy="81" r="1.1" fill="#b8b8b8"/><circle cx="16" cy="6" r="1.6" fill="#c8c8c8"/><circle cx="72" cy="6" r="1.6" fill="#c8c8c8"/><circle cx="17" cy="81" r="1.6" fill="#c8c8c8"/><circle cx="72" cy="81" r="1.6" fill="#c8c8c8"/><circle cx="83.5" cy="18" r="3" fill="none" stroke="#111" stroke-width="0.9"/><circle cx="83.5" cy="69.5" r="3" fill="none" stroke="#111" stroke-width="0.9"/><circle cx="4.5" cy="69.5" r="3" fill="none" stroke="#111" stroke-width="0.9"/><path d="M4.5 17.5 L8.5 20.5 L4.5 23.5Z" fill="#0000ff"/><rect x="10" y="10.5" width="67.5" height="66" fill="#8a8a8a"/><rect x="19" y="11" width="50" height="4.5" fill="#1a1a1a"/><rect x="19" y="72" width="50" height="4.5" fill="#1a1a1a"/><rect x="11" y="19" width="4.5" height="50" fill="#1a1a1a"/><rect x="72" y="19" width="4.5" height="50" fill="#1a1a1a"/><path d="M10.5 10.5 L77 10.5 M10.5 10.5 L10.5 76 M77 10.5 L77 76 M10.5 76 L77 76" stroke="#1a1a1a" stroke-width="1" fill="none"/><rect x="20.50" y="11.5" width="1.5" height="4" fill="#ffff00"/><rect x="20.50" y="15.5" width="1.5" height="3" fill="#f0f0f0"/><rect x="20.50" y="72" width="1.5" height="4" fill="#ffff00"/><rect x="20.50" y="69" width="1.5" height="3" fill="#f0f0f0"/><rect x="23.60" y="11.5" width="1.5" height="4" fill="#ffff00"/><rect x="23.60" y="15.5" width="1.5" height="3" fill="#f0f0f0"/><rect x="23.60" y="72" width="1.5" height="4" fill="#ffff00"/><rect x="23.60" y="69" width="1.5" height="3" fill="#f0f0f0"/><rect x="26.70" y="11.5" width="1.5" height="4" fill="#ffff00"/><rect x="26.70" y="15.5" width="1.5" height="3" fill="#f0f0f0"/><rect x="26.70" y="72" width="1.5" height="4" fill="#ffff00"/><rect x="26.70" y="69" width="1.5" height="3" fill="#f0f0f0"/><rect x="29.80" y="11.5" width="1.5" height="4" fill="#ffff00"/><rect x="29.80" y="15.5" width="1.5" height="3" fill="#f0f0f0"/><rect x="29.80" y="72" width="1.5" height="4" fill="#ffff00"/><rect x="29.80" y="69" width="1.5" height="3" fill="#f0f0f0"/><rect x="32.90" y="11.5" width="1.5" height="4" fill="#ffff00"/><rect x="32.90" y="15.5" width="1.5" height="3" fill="#f0f0f0"/><rect x="32.90" y="72" width="1.5" height="4" fill="#ffff00"/><rect x="32.90" y="69" width="1.5" height="3" fill="#f0f0f0"/><rect x="36.00" y="11.5" width="1.5" height="4" fill="#ffff00"/><rect x="36.00" y="15.5" width="1.5" height="3" fill="#f0f0f0"/><rect x="36.00" y="72" width="1.5" height="4" fill="#ffff00"/><rect x="36.00" y="69" width="1.5" height="3" fill="#f0f0f0"/><rect x="39.10" y="11.5" width="1.5" height="4" fill="#ffff00"/><rect x="39.10" y="15.5" width="1.5" height="3" fill="#f0f0f0"/><rect x="39.10" y="72" width="1.5" height="4" fill="#ffff00"/><rect x="39.10" y="69" width="1.5" height="3" fill="#f0f0f0"/><rect x="42.20" y="11.5" width="1.5" height="4" fill="#ffff00"/><rect x="42.20" y="15.5" width="1.5" height="3" fill="#f0f0f0"/><rect x="42.20" y="72" width="1.5" height="4" fill="#ffff00"/><rect x="42.20" y="69" width="1.5" height="3" fill="#f0f0f0"/><rect x="45.30" y="11.5" width="1.5" height="4" fill="#ffff00"/><rect x="45.30" y="15.5" width="1.5" height="3" fill="#f0f0f0"/><rect x="45.30" y="72" width="1.5" height="4" fill="#ffff00"/><rect x="45.30" y="69" width="1.5" height="3" fill="#f0f0f0"/><rect x="48.40" y="11.5" width="1.5" height="4" fill="#ffff00"/><rect x="48.40" y="15.5" width="1.5" height="3" fill="#f0f0f0"/><rect x="48.40" y="72" width="1.5" height="4" fill="#ffff00"/><rect x="48.40" y="69" width="1.5" height="3" fill="#f0f0f0"/><rect x="51.50" y="11.5" width="1.5" height="4" fill="#ffff00"/><rect x="51.50" y="15.5" width="1.5" height="3" fill="#f0f0f0"/><rect x="51.50" y="72" width="1.5" height="4" fill="#ffff00"/><rect x="51.50" y="69" width="1.5" height="3" fill="#f0f0f0"/><rect x="54.60" y="11.5" width="1.5" height="4" fill="#ffff00"/><rect x="54.60" y="15.5" width="1.5" height="3" fill="#f0f0f0"/><rect x="54.60" y="72" width="1.5" height="4" fill="#ffff00"/><rect x="54.60" y="69" width="1.5" height="3" fill="#f0f0f0"/><rect x="57.70" y="11.5" width="1.5" height="4" fill="#ffff00"/><rect x="57.70" y="15.5" width="1.5" height="3" fill="#f0f0f0"/><rect x="57.70" y="72" width="1.5" height="4" fill="#ffff00"/><rect x="57.70" y="69" width="1.5" height="3" fill="#f0f0f0"/><rect x="60.80" y="11.5" width="1.5" height="4" fill="#ffff00"/><rect x="60.80" y="15.5" width="1.5" height="3" fill="#f0f0f0"/><rect x="60.80" y="72" width="1.5" height="4" fill="#ffff00"/><rect x="60.80" y="69" width="1.5" height="3" fill="#f0f0f0"/><rect x="63.90" y="11.5" width="1.5" height="4" fill="#ffff00"/><rect x="63.90" y="15.5" width="1.5" height="3" fill="#f0f0f0"/><rect x="63.90" y="72" width="1.5" height="4" fill="#ffff00"/><rect x="63.90" y="69" width="1.5" height="3" fill="#f0f0f0"/><rect x="67.00" y="11.5" width="1.5" height="4" fill="#ffff00"/><rect x="67.00" y="15.5" width="1.5" height="3" fill="#f0f0f0"/><rect x="67.00" y="72" width="1.5" height="4" fill="#ffff00"/><rect x="67.00" y="69" width="1.5" height="3" fill="#f0f0f0"/><rect x="11.5" y="20.30" width="4" height="1.5" fill="#ffff00"/><rect x="15.5" y="20.30" width="3" height="1.5" fill="#f0f0f0"/><rect x="72" y="20.30" width="4" height="1.5" fill="#ffff00"/><rect x="69" y="20.30" width="3" height="1.5" fill="#f0f0f0"/><rect x="11.5" y="23.35" width="4" height="1.5" fill="#ffff00"/><rect x="15.5" y="23.35" width="3" height="1.5" fill="#f0f0f0"/><rect x="72" y="23.35" width="4" height="1.5" fill="#ffff00"/><rect x="69" y="23.35" width="3" height="1.5" fill="#f0f0f0"/><rect x="11.5" y="26.40" width="4" height="1.5" fill="#ffff00"/><rect x="15.5" y="26.40" width="3" height="1.5" fill="#f0f0f0"/><rect x="72" y="26.40" width="4" height="1.5" fill="#ffff00"/><rect x="69" y="26.40" width="3" height="1.5" fill="#f0f0f0"/><rect x="11.5" y="29.45" width="4" height="1.5" fill="#ffff00"/><rect x="15.5" y="29.45" width="3" height="1.5" fill="#f0f0f0"/><rect x="72" y="29.45" width="4" height="1.5" fill="#ffff00"/><rect x="69" y="29.45" width="3" height="1.5" fill="#f0f0f0"/><rect x="11.5" y="32.50" width="4" height="1.5" fill="#ffff00"/><rect x="15.5" y="32.50" width="3" height="1.5" fill="#f0f0f0"/><rect x="72" y="32.50" width="4" height="1.5" fill="#ffff00"/><rect x="69" y="32.50" width="3" height="1.5" fill="#f0f0f0"/><rect x="11.5" y="35.55" width="4" height="1.5" fill="#ffff00"/><rect x="15.5" y="35.55" width="3" height="1.5" fill="#f0f0f0"/><rect x="72" y="35.55" width="4" height="1.5" fill="#ffff00"/><rect x="69" y="35.55" width="3" height="1.5" fill="#f0f0f0"/><rect x="11.5" y="38.60" width="4" height="1.5" fill="#ffff00"/><rect x="15.5" y="38.60" width="3" height="1.5" fill="#f0f0f0"/><rect x="72" y="38.60" width="4" height="1.5" fill="#ffff00"/><rect x="69" y="38.60" width="3" height="1.5" fill="#f0f0f0"/><rect x="11.5" y="41.65" width="4" height="1.5" fill="#ffff00"/><rect x="15.5" y="41.65" width="3" height="1.5" fill="#f0f0f0"/><rect x="72" y="41.65" width="4" height="1.5" fill="#ffff00"/><rect x="69" y="41.65" width="3" height="1.5" fill="#f0f0f0"/><rect x="11.5" y="44.70" width="4" height="1.5" fill="#ffff00"/><rect x="15.5" y="44.70" width="3" height="1.5" fill="#f0f0f0"/><rect x="72" y="44.70" width="4" height="1.5" fill="#ffff00"/><rect x="69" y="44.70" width="3" height="1.5" fill="#f0f0f0"/><rect x="11.5" y="47.75" width="4" height="1.5" fill="#ffff00"/><rect x="15.5" y="47.75" width="3" height="1.5" fill="#f0f0f0"/><rect x="72" y="47.75" width="4" height="1.5" fill="#ffff00"/><rect x="69" y="47.75" width="3" height="1.5" fill="#f0f0f0"/><rect x="11.5" y="50.80" width="4" height="1.5" fill="#ffff00"/><rect x="15.5" y="50.80" width="3" height="1.5" fill="#f0f0f0"/><rect x="72" y="50.80" width="4" height="1.5" fill="#ffff00"/><rect x="69" y="50.80" width="3" height="1.5" fill="#f0f0f0"/><rect x="11.5" y="53.85" width="4" height="1.5" fill="#ffff00"/><rect x="15.5" y="53.85" width="3" height="1.5" fill="#f0f0f0"/><rect x="72" y="53.85" width="4" height="1.5" fill="#ffff00"/><rect x="69" y="53.85" width="3" height="1.5" fill="#f0f0f0"/><rect x="11.5" y="56.90" width="4" height="1.5" fill="#ffff00"/><rect x="15.5" y="56.90" width="3" height="1.5" fill="#f0f0f0"/><rect x="72" y="56.90" width="4" height="1.5" fill="#ffff00"/><rect x="69" y="56.90" width="3" height="1.5" fill="#f0f0f0"/><rect x="11.5" y="59.95" width="4" height="1.5" fill="#ffff00"/><rect x="15.5" y="59.95" width="3" height="1.5" fill="#f0f0f0"/><rect x="72" y="59.95" width="4" height="1.5" fill="#ffff00"/><rect x="69" y="59.95" width="3" height="1.5" fill="#f0f0f0"/><rect x="11.5" y="63.00" width="4" height="1.5" fill="#ffff00"/><rect x="15.5" y="63.00" width="3" height="1.5" fill="#f0f0f0"/><rect x="72" y="63.00" width="4" height="1.5" fill="#ffff00"/><rect x="69" y="63.00" width="3" height="1.5" fill="#f0f0f0"/><rect x="11.5" y="66.05" width="4" height="1.5" fill="#ffff00"/><rect x="15.5" y="66.05" width="3" height="1.5" fill="#f0f0f0"/><rect x="72" y="66.05" width="4" height="1.5" fill="#ffff00"/><rect x="69" y="66.05" width="3" height="1.5" fill="#f0f0f0"/><path d="M11.5 18.5 L14.5 18.5 L18.5 14.5 L18.5 11.5 M13.5 13.5 L16.5 16.5" stroke="#1a1a1a" stroke-width="1.3" fill="none"/><rect x="11.0" y="11.0" width="3" height="3" fill="#3a3a4a"/><path d="M76 18.5 L73 18.5 L69 14.5 L69 11.5 M74 13.5 L71 16.5" stroke="#1a1a1a" stroke-width="1.3" fill="none"/><rect x="73.5" y="11.0" width="3" height="3" fill="#3a3a4a"/><path d="M11.5 68 L14.5 68 L18.5 72 L18.5 75 M13.5 73 L16.5 70" stroke="#1a1a1a" stroke-width="1.3" fill="none"/><rect x="11.0" y="72.5" width="3" height="3" fill="#3a3a4a"/><path d="M76 68 L73 68 L69 72 L69 75 M74 73 L71 70" stroke="#1a1a1a" stroke-width="1.3" fill="none"/><rect x="73.5" y="72.5" width="3" height="3" fill="#3a3a4a"/><rect x="18.5" y="18.5" width="50" height="50" fill="#1a1a1a"/><rect x="20.5" y="20.5" width="46" height="46" fill="#5a5a5a"/><rect x="23" y="23" width="41" height="41" fill="#000"/><rect x="24" y="24" width="39" height="39" fill="#1e5c00"/><text x="44" y="85" font-family="Liberation Sans" font-size="13" fill="#1a1a3a" text-anchor="middle" textLength="38" lengthAdjust="spacingAndGlyphs">Empty</text></svg>
<svg style="position:absolute;left:143px;top:459px;" width="88" height="41" viewBox="0 0 88 41"><defs><linearGradient id="lg" x1="0" y1="0" x2="0" y2="1"><stop offset="0" stop-color="#5a5a5a"/><stop offset="0.5" stop-color="#8c8c8c"/><stop offset="1" stop-color="#606060"/></linearGradient></defs><rect x="0" y="0" width="88" height="6.5" fill="#fff"/><rect x="0.5" y="6.5" width="87" height="33.5" fill="url(#lg)" stroke="#111" stroke-width="1"/><line x1="1" y1="18.5" x2="87" y2="18.5" stroke="#1a1a1a" stroke-width="1"/><rect x="0" y="40" width="88" height="1" fill="#fff"/><rect x="19.5" y="8.5" width="49" height="19.5" fill="#7c7c84" stroke="#111" stroke-width="1"/><line x1="19.5" y1="17.75" x2="68.5" y2="17.75" stroke="#222" stroke-width="1"/><rect x="21" y="9.0" width="1" height="18.5" fill="#ffff00" shape-rendering="crispEdges"/><rect x="24" y="9.0" width="1" height="18.5" fill="#ffff00" shape-rendering="crispEdges"/><rect x="27" y="9.0" width="1" height="18.5" fill="#ffff00" shape-rendering="crispEdges"/><rect x="30" y="9.0" width="1" height="18.5" fill="#ffff00" shape-rendering="crispEdges"/><rect x="33" y="9.0" width="1" height="18.5" fill="#ffff00" shape-rendering="crispEdges"/><rect x="36" y="9.0" width="1" height="18.5" fill="#ffff00" shape-rendering="crispEdges"/><rect x="39" y="9.0" width="1" height="18.5" fill="#ffff00" shape-rendering="crispEdges"/><rect x="42" y="9.0" width="1" height="18.5" fill="#ffff00" shape-rendering="crispEdges"/><rect x="45" y="9.0" width="1" height="18.5" fill="#ffff00" shape-rendering="crispEdges"/><rect x="48" y="9.0" width="1" height="18.5" fill="#ffff00" shape-rendering="crispEdges"/><rect x="51" y="9.0" width="1" height="18.5" fill="#ffff00" shape-rendering="crispEdges"/><rect x="54" y="9.0" width="1" height="18.5" fill="#ffff00" shape-rendering="crispEdges"/><rect x="57" y="9.0" width="1" height="18.5" fill="#ffff00" shape-rendering="crispEdges"/><rect x="60" y="9.0" width="1" height="18.5" fill="#ffff00" shape-rendering="crispEdges"/><rect x="63" y="9.0" width="1" height="18.5" fill="#ffff00" shape-rendering="crispEdges"/><rect x="66" y="9.0" width="1" height="18.5" fill="#ffff00" shape-rendering="crispEdges"/><text x="44" y="37.5" font-family="Liberation Sans" font-size="13" fill="#1a1a3a" text-anchor="middle" textLength="46" lengthAdjust="spacingAndGlyphs">Opened</text></svg>
<div style="left:138.00px;top:500.85px;font-size:13px;line-height:15.60px;color:#111;font-weight:400;white-space:nowrap;transform-origin:0 0;transform:scaleX(1.0139);-webkit-text-stroke:0.25px #111;">#2 [3078-00002]</div>
<div style="left:130px;top:516px;width:114px;height:79px;background:#fff;border-top:1px solid #a0a0a0;border-left:1px solid #a0a0a0;border-right:1px solid #fff;border-bottom:1px solid #fff;box-sizing:border-box"></div>
<div style="left:131px;top:517px;width:112px;height:77px;border-top:1px solid #e8e8e8;border-left:1px solid #e8e8e8;box-sizing:border-box"></div>
<div style="left:132px;top:518px;width:58px;height:19px;background:#f0f0f0;border-top:1px solid #fff;border-left:1px solid #fff;border-right:1px solid #000;border-bottom:1px solid #000;box-sizing:border-box"></div>
<div style="left:190px;top:518px;width:52px;height:19px;background:#f0f0f0;border-top:1px solid #fff;border-left:1px solid #fff;border-right:1px solid #000;border-bottom:1px solid #000;box-sizing:border-box"></div>
<div style="left:134.00px;top:521.64px;font-size:12.5px;line-height:15.00px;color:#000;font-weight:400;white-space:nowrap;transform-origin:0 0;transform:scaleX(1.0198);">Statistics</div>
<div style="left:190px;top:537px;width:51px;height:19px;background:#0078d7"></div>
<div style="left:132px;top:555px;width:110px;height:1px;background:#d0d0d0"></div>
<div style="left:189px;top:537px;width:1px;height:19px;background:#d0d0d0"></div>
<div style="left:134.00px;top:541.14px;font-size:12.5px;line-height:15.00px;color:#000;font-weight:400;white-space:nowrap;transform-origin:0 0;transform:scaleX(1.0984);">Total</div>
<div style="left:192.00px;top:541.14px;font-size:12.5px;line-height:15.00px;color:#fff;font-weight:400;white-space:nowrap;transform-origin:0 0;transform:scaleX(0.9351);">16</div>
<div style="left:132px;top:574px;width:110px;height:1px;background:#d0d0d0"></div>
<div style="left:189px;top:556px;width:1px;height:19px;background:#d0d0d0"></div>
<div style="left:134.00px;top:560.14px;font-size:12.5px;line-height:15.00px;color:#000;font-weight:400;white-space:nowrap;transform-origin:0 0;transform:scaleX(1.0422);">Valid</div>
<div style="left:192.00px;top:560.14px;font-size:12.5px;line-height:15.00px;color:#000;font-weight:400;white-space:nowrap;transform-origin:0 0;transform:scaleX(0.9351);">15</div>
<div style="left:132px;top:593px;width:110px;height:1px;background:#d0d0d0"></div>
<div style="left:189px;top:575px;width:1px;height:19px;background:#d0d0d0"></div>
<div style="left:134.00px;top:579.14px;font-size:12.5px;line-height:15.00px;color:#000;font-weight:400;white-space:nowrap;transform-origin:0 0;transform:scaleX(0.9694);">Failed</div>
<div style="left:192.00px;top:579.14px;font-size:12.5px;line-height:15.00px;color:#000;font-weight:400;white-space:nowrap;transform-origin:0 0;transform:scaleX(1.0070);">1</div>
<div style="left:246px;top:343px;width:116px;height:255px;background:#696969"></div>
<svg style="position:absolute;left:260.5px;top:346.5px;" width="21" height="21" viewBox="0 0 21 21"><circle cx="10.5" cy="10.5" r="10" fill="#800000"/></svg>
<svg style="position:absolute;left:292.4px;top:346.5px;" width="21" height="21" viewBox="0 0 21 21"><circle cx="10.5" cy="10.5" r="10" fill="#008000"/></svg>
<svg style="position:absolute;left:326.4px;top:346.5px;" width="21" height="21" viewBox="0 0 21 21"><circle cx="10.5" cy="10.5" r="10" fill="#ffff00"/></svg>
<svg style="position:absolute;left:260px;top:369px;" width="88" height="88" viewBox="0 0 88 88"><defs><linearGradient id="sg" x1="0" y1="0" x2="1" y2="0"><stop offset="0" stop-color="#7a7a7a"/><stop offset="0.15" stop-color="#9a9a9a"/><stop offset="0.85" stop-color="#8a8a8a"/><stop offset="1" stop-color="#5a5a5a"/></linearGradient><linearGradient id="ic" x1="0" y1="0" x2="1" y2="1"><stop offset="0" stop-color="#000"/><stop offset="1" stop-color="#5a5a5a"/></linearGradient></defs><rect x="0.5" y="0.5" width="87" height="87" rx="1.5" fill="url(#sg)" stroke="#1a1a1a" stroke-width="1"/><rect x="2" y="2" width="84" height="84" fill="none" stroke="#a8a8a8" stroke-width="1"/><circle cx="6.5" cy="6" r="3.6" fill="#c0c0c0"/><circle cx="6.5" cy="6" r="2.9" fill="#9a9a9a" stroke="#111" stroke-width="1"/><circle cx="6.5" cy="6" r="1.1" fill="#b8b8b8"/><circle cx="81.5" cy="6" r="3.6" fill="#c0c0c0"/><circle cx="81.5" cy="6" r="2.9" fill="#9a9a9a" stroke="#111" stroke-width="1"/><circle cx="81.5" cy="6" r="1.1" fill="#b8b8b8"/><circle cx="6.5" cy="81" r="3.6" fill="#c0c0c0"/><circle cx="6.5" cy="81" r="2.9" fill="#9a9a9a" stroke="#111" stroke-width="1"/><circle cx="6.5" cy="81" r="1.1" fill="#b8b8b8"/><circle cx="81.5" cy="81" r="3.6" fill="#c0c0c0"/><circle cx="81.5" cy="81" r="2.9" fill="#9a9a9a" stroke="#111" stroke-width="1"/><circle cx="81.5" cy="81" r="1.1" fill="#b8b8b8"/><circle cx="16" cy="6" r="1.6" fill="#c8c8c8"/><circle cx="72" cy="6" r="1.6" fill="#c8c8c8"/><circle cx="17" cy="81" r="1.6" fill="#c8c8c8"/><circle cx="72" cy="81" r="1.6" fill="#c8c8c8"/><circle cx="83.5" cy="18" r="3" fill="none" stroke="#111" stroke-width="0.9"/><circle cx="83.5" cy="69.5" r="3" fill="none" stroke="#111" stroke-width="0.9"/><circle cx="4.5" cy="69.5" r="3" fill="none" stroke="#111" stroke-width="0.9"/><path d="M4.5 17.5 L8.5 20.5 L4.5 23.5Z" fill="#0000ff"/><rect x="10" y="10.5" width="67.5" height="66" fill="#8a8a8a"/><rect x="19" y="11" width="50" height="4.5" fill="#1a1a1a"/><rect x="19" y="72" width="50" height="4.5" fill="#1a1a1a"/><rect x="11" y="19" width="4.5" height="50" fill="#1a1a1a"/><rect x="72" y="19" width="4.5" height="50" fill="#1a1a1a"/><path d="M10.5 10.5 L77 10.5 M10.5 10.5 L10.5 76 M77 10.5 L77 76 M10.5 76 L77 76" stroke="#1a1a1a" stroke-width="1" fill="none"/><rect x="20.50" y="11.5" width="1.5" height="4" fill="#ffff00"/><rect x="20.50" y="15.5" width="1.5" height="3" fill="#f0f0f0"/><rect x="20.50" y="72" width="1.5" height="4" fill="#ffff00"/><rect x="20.50" y="69" width="1.5" height="3" fill="#f0f0f0"/><rect x="23.60" y="11.5" width="1.5" height="4" fill="#ffff00"/><rect x="23.60" y="15.5" width="1.5" height="3" fill="#f0f0f0"/><rect x="23.60" y="72" width="1.5" height="4" fill="#ffff00"/><rect x="23.60" y="69" width="1.5" height="3" fill="#f0f0f0"/><rect x="26.70" y="11.5" width="1.5" height="4" fill="#ffff00"/><rect x="26.70" y="15.5" width="1.5" height="3" fill="#f0f0f0"/><rect x="26.70" y="72" width="1.5" height="4" fill="#ffff00"/><rect x="26.70" y="69" width="1.5" height="3" fill="#f0f0f0"/><rect x="29.80" y="11.5" width="1.5" height="4" fill="#ffff00"/><rect x="29.80" y="15.5" width="1.5" height="3" fill="#f0f0f0"/><rect x="29.80" y="72" width="1.5" height="4" fill="#ffff00"/><rect x="29.80" y="69" width="1.5" height="3" fill="#f0f0f0"/><rect x="32.90" y="11.5" width="1.5" height="4" fill="#ffff00"/><rect x="32.90" y="15.5" width="1.5" height="3" fill="#f0f0f0"/><rect x="32.90" y="72" width="1.5" height="4" fill="#ffff00"/><rect x="32.90" y="69" width="1.5" height="3" fill="#f0f0f0"/><rect x="36.00" y="11.5" width="1.5" height="4" fill="#ffff00"/><rect x="36.00" y="15.5" width="1.5" height="3" fill="#f0f0f0"/><rect x="36.00" y="72" width="1.5" height="4" fill="#ffff00"/><rect x="36.00" y="69" width="1.5" height="3" fill="#f0f0f0"/><rect x="39.10" y="11.5" width="1.5" height="4" fill="#ffff00"/><rect x="39.10" y="15.5" width="1.5" height="3" fill="#f0f0f0"/><rect x="39.10" y="72" width="1.5" height="4" fill="#ffff00"/><rect x="39.10" y="69" width="1.5" height="3" fill="#f0f0f0"/><rect x="42.20" y="11.5" width="1.5" height="4" fill="#ffff00"/><rect x="42.20" y="15.5" width="1.5" height="3" fill="#f0f0f0"/><rect x="42.20" y="72" width="1.5" height="4" fill="#ffff00"/><rect x="42.20" y="69" width="1.5" height="3" fill="#f0f0f0"/><rect x="45.30" y="11.5" width="1.5" height="4" fill="#ffff00"/><rect x="45.30" y="15.5" width="1.5" height="3" fill="#f0f0f0"/><rect x="45.30" y="72" width="1.5" height="4" fill="#ffff00"/><rect x="45.30" y="69" width="1.5" height="3" fill="#f0f0f0"/><rect x="48.40" y="11.5" width="1.5" height="4" fill="#ffff00"/><rect x="48.40" y="15.5" width="1.5" height="3" fill="#f0f0f0"/><rect x="48.40" y="72" width="1.5" height="4" fill="#ffff00"/><rect x="48.40" y="69" width="1.5" height="3" fill="#f0f0f0"/><rect x="51.50" y="11.5" width="1.5" height="4" fill="#ffff00"/><rect x="51.50" y="15.5" width="1.5" height="3" fill="#f0f0f0"/><rect x="51.50" y="72" width="1.5" height="4" fill="#ffff00"/><rect x="51.50" y="69" width="1.5" height="3" fill="#f0f0f0"/><rect x="54.60" y="11.5" width="1.5" height="4" fill="#ffff00"/><rect x="54.60" y="15.5" width="1.5" height="3" fill="#f0f0f0"/><rect x="54.60" y="72" width="1.5" height="4" fill="#ffff00"/><rect x="54.60" y="69" width="1.5" height="3" fill="#f0f0f0"/><rect x="57.70" y="11.5" width="1.5" height="4" fill="#ffff00"/><rect x="57.70" y="15.5" width="1.5" height="3" fill="#f0f0f0"/><rect x="57.70" y="72" width="1.5" height="4" fill="#ffff00"/><rect x="57.70" y="69" width="1.5" height="3" fill="#f0f0f0"/><rect x="60.80" y="11.5" width="1.5" height="4" fill="#ffff00"/><rect x="60.80" y="15.5" width="1.5" height="3" fill="#f0f0f0"/><rect x="60.80" y="72" width="1.5" height="4" fill="#ffff00"/><rect x="60.80" y="69" width="1.5" height="3" fill="#f0f0f0"/><rect x="63.90" y="11.5" width="1.5" height="4" fill="#ffff00"/><rect x="63.90" y="15.5" width="1.5" height="3" fill="#f0f0f0"/><rect x="63.90" y="72" width="1.5" height="4" fill="#ffff00"/><rect x="63.90" y="69" width="1.5" height="3" fill="#f0f0f0"/><rect x="67.00" y="11.5" width="1.5" height="4" fill="#ffff00"/><rect x="67.00" y="15.5" width="1.5" height="3" fill="#f0f0f0"/><rect x="67.00" y="72" width="1.5" height="4" fill="#ffff00"/><rect x="67.00" y="69" width="1.5" height="3" fill="#f0f0f0"/><rect x="11.5" y="20.30" width="4" height="1.5" fill="#ffff00"/><rect x="15.5" y="20.30" width="3" height="1.5" fill="#f0f0f0"/><rect x="72" y="20.30" width="4" height="1.5" fill="#ffff00"/><rect x="69" y="20.30" width="3" height="1.5" fill="#f0f0f0"/><rect x="11.5" y="23.35" width="4" height="1.5" fill="#ffff00"/><rect x="15.5" y="23.35" width="3" height="1.5" fill="#f0f0f0"/><rect x="72" y="23.35" width="4" height="1.5" fill="#ffff00"/><rect x="69" y="23.35" width="3" height="1.5" fill="#f0f0f0"/><rect x="11.5" y="26.40" width="4" height="1.5" fill="#ffff00"/><rect x="15.5" y="26.40" width="3" height="1.5" fill="#f0f0f0"/><rect x="72" y="26.40" width="4" height="1.5" fill="#ffff00"/><rect x="69" y="26.40" width="3" height="1.5" fill="#f0f0f0"/><rect x="11.5" y="29.45" width="4" height="1.5" fill="#ffff00"/><rect x="15.5" y="29.45" width="3" height="1.5" fill="#f0f0f0"/><rect x="72" y="29.45" width="4" height="1.5" fill="#ffff00"/><rect x="69" y="29.45" width="3" height="1.5" fill="#f0f0f0"/><rect x="11.5" y="32.50" width="4" height="1.5" fill="#ffff00"/><rect x="15.5" y="32.50" width="3" height="1.5" fill="#f0f0f0"/><rect x="72" y="32.50" width="4" height="1.5" fill="#ffff00"/><rect x="69" y="32.50" width="3" height="1.5" fill="#f0f0f0"/><rect x="11.5" y="35.55" width="4" height="1.5" fill="#ffff00"/><rect x="15.5" y="35.55" width="3" height="1.5" fill="#f0f0f0"/><rect x="72" y="35.55" width="4" height="1.5" fill="#ffff00"/><rect x="69" y="35.55" width="3" height="1.5" fill="#f0f0f0"/><rect x="11.5" y="38.60" width="4" height="1.5" fill="#ffff00"/><rect x="15.5" y="38.60" width="3" height="1.5" fill="#f0f0f0"/><rect x="72" y="38.60" width="4" height="1.5" fill="#ffff00"/><rect x="69" y="38.60" width="3" height="1.5" fill="#f0f0f0"/><rect x="11.5" y="41.65" width="4" height="1.5" fill="#ffff00"/><rect x="15.5" y="41.65" width="3" height="1.5" fill="#f0f0f0"/><rect x="72" y="41.65" width="4" height="1.5" fill="#ffff00"/><rect x="69" y="41.65" width="3" height="1.5" fill="#f0f0f0"/><rect x="11.5" y="44.70" width="4" height="1.5" fill="#ffff00"/><rect x="15.5" y="44.70" width="3" height="1.5" fill="#f0f0f0"/><rect x="72" y="44.70" width="4" height="1.5" fill="#ffff00"/><rect x="69" y="44.70" width="3" height="1.5" fill="#f0f0f0"/><rect x="11.5" y="47.75" width="4" height="1.5" fill="#ffff00"/><rect x="15.5" y="47.75" width="3" height="1.5" fill="#f0f0f0"/><rect x="72" y="47.75" width="4" height="1.5" fill="#ffff00"/><rect x="69" y="47.75" width="3" height="1.5" fill="#f0f0f0"/><rect x="11.5" y="50.80" width="4" height="1.5" fill="#ffff00"/><rect x="15.5" y="50.80" width="3" height="1.5" fill="#f0f0f0"/><rect x="72" y="50.80" width="4" height="1.5" fill="#ffff00"/><rect x="69" y="50.80" width="3" height="1.5" fill="#f0f0f0"/><rect x="11.5" y="53.85" width="4" height="1.5" fill="#ffff00"/><rect x="15.5" y="53.85" width="3" height="1.5" fill="#f0f0f0"/><rect x="72" y="53.85" width="4" height="1.5" fill="#ffff00"/><rect x="69" y="53.85" width="3" height="1.5" fill="#f0f0f0"/><rect x="11.5" y="56.90" width="4" height="1.5" fill="#ffff00"/><rect x="15.5" y="56.90" width="3" height="1.5" fill="#f0f0f0"/><rect x="72" y="56.90" width="4" height="1.5" fill="#ffff00"/><rect x="69" y="56.90" width="3" height="1.5" fill="#f0f0f0"/><rect x="11.5" y="59.95" width="4" height="1.5" fill="#ffff00"/><rect x="15.5" y="59.95" width="3" height="1.5" fill="#f0f0f0"/><rect x="72" y="59.95" width="4" height="1.5" fill="#ffff00"/><rect x="69" y="59.95" width="3" height="1.5" fill="#f0f0f0"/><rect x="11.5" y="63.00" width="4" height="1.5" fill="#ffff00"/><rect x="15.5" y="63.00" width="3" height="1.5" fill="#f0f0f0"/><rect x="72" y="63.00" width="4" height="1.5" fill="#ffff00"/><rect x="69" y="63.00" width="3" height="1.5" fill="#f0f0f0"/><rect x="11.5" y="66.05" width="4" height="1.5" fill="#ffff00"/><rect x="15.5" y="66.05" width="3" height="1.5" fill="#f0f0f0"/><rect x="72" y="66.05" width="4" height="1.5" fill="#ffff00"/><rect x="69" y="66.05" width="3" height="1.5" fill="#f0f0f0"/><path d="M11.5 18.5 L14.5 18.5 L18.5 14.5 L18.5 11.5 M13.5 13.5 L16.5 16.5" stroke="#1a1a1a" stroke-width="1.3" fill="none"/><rect x="11.0" y="11.0" width="3" height="3" fill="#3a3a4a"/><path d="M76 18.5 L73 18.5 L69 14.5 L69 11.5 M74 13.5 L71 16.5" stroke="#1a1a1a" stroke-width="1.3" fill="none"/><rect x="73.5" y="11.0" width="3" height="3" fill="#3a3a4a"/><path d="M11.5 68 L14.5 68 L18.5 72 L18.5 75 M13.5 73 L16.5 70" stroke="#1a1a1a" stroke-width="1.3" fill="none"/><rect x="11.0" y="72.5" width="3" height="3" fill="#3a3a4a"/><path d="M76 68 L73 68 L69 72 L69 75 M74 73 L71 70" stroke="#1a1a1a" stroke-width="1.3" fill="none"/><rect x="73.5" y="72.5" width="3" height="3" fill="#3a3a4a"/><rect x="18.5" y="18.5" width="50" height="50" fill="url(#ic)"/><text x="43" y="44" font-family="Liberation Serif" font-style="italic" font-weight="700" font-size="20" fill="#9e9a94" text-anchor="middle">IC</text><text x="44" y="85" font-family="Liberation Sans" font-size="13" fill="#1a1a3a" text-anchor="middle" textLength="51" lengthAdjust="spacingAndGlyphs">Occupied</text></svg>
<svg style="position:absolute;left:260px;top:459px;" width="88" height="41" viewBox="0 0 88 41"><defs><linearGradient id="lg" x1="0" y1="0" x2="0" y2="1"><stop offset="0" stop-color="#5a5a5a"/><stop offset="0.5" stop-color="#8c8c8c"/><stop offset="1" stop-color="#606060"/></linearGradient></defs><rect x="0.5" y="0.5" width="87" height="39.5" fill="url(#lg)" stroke="#111" stroke-width="1"/><rect x="0" y="40" width="88" height="1" fill="#fff"/><rect x="0.5" y="13" width="87" height="5" fill="#7a7a7a" stroke="#333" stroke-width="0.8"/><rect x="0" y="13" width="14" height="5" fill="#fff"/><path d="M2 14.5 L11 15.5 L2 16.5Z" fill="#e0d000"/><rect x="2" y="15" width="9" height="1" fill="#555"/><rect x="74" y="13" width="14" height="5" fill="#fff"/><path d="M77 14.5 L86 15.5 L77 16.5Z" fill="#e0d000"/><rect x="77" y="15" width="9" height="1" fill="#555"/><rect x="19.5" y="7.5" width="49" height="20" fill="#7c7c84" stroke="#111" stroke-width="1"/><line x1="19.5" y1="17.0" x2="68.5" y2="17.0" stroke="#222" stroke-width="1"/><rect x="21" y="8.0" width="1" height="19" fill="#ffff00" shape-rendering="crispEdges"/><rect x="24" y="8.0" width="1" height="19" fill="#ffff00" shape-rendering="crispEdges"/><rect x="27" y="8.0" width="1" height="19" fill="#ffff00" shape-rendering="crispEdges"/><rect x="30" y="8.0" width="1" height="19" fill="#ffff00" shape-rendering="crispEdges"/><rect x="33" y="8.0" width="1" height="19" fill="#ffff00" shape-rendering="crispEdges"/><rect x="36" y="8.0" width="1" height="19" fill="#ffff00" shape-rendering="crispEdges"/><rect x="39" y="8.0" width="1" height="19" fill="#ffff00" shape-rendering="crispEdges"/><rect x="42" y="8.0" width="1" height="19" fill="#ffff00" shape-rendering="crispEdges"/><rect x="45" y="8.0" width="1" height="19" fill="#ffff00" shape-rendering="crispEdges"/><rect x="48" y="8.0" width="1" height="19" fill="#ffff00" shape-rendering="crispEdges"/><rect x="51" y="8.0" width="1" height="19" fill="#ffff00" shape-rendering="crispEdges"/><rect x="54" y="8.0" width="1" height="19" fill="#ffff00" shape-rendering="crispEdges"/><rect x="57" y="8.0" width="1" height="19" fill="#ffff00" shape-rendering="crispEdges"/><rect x="60" y="8.0" width="1" height="19" fill="#ffff00" shape-rendering="crispEdges"/><rect x="63" y="8.0" width="1" height="19" fill="#ffff00" shape-rendering="crispEdges"/><rect x="66" y="8.0" width="1" height="19" fill="#ffff00" shape-rendering="crispEdges"/><text x="44" y="37.5" font-family="Liberation Sans" font-size="13" fill="#1a1a3a" text-anchor="middle" textLength="37" lengthAdjust="spacingAndGlyphs">Closed</text></svg>
<div style="left:255.00px;top:500.85px;font-size:13px;line-height:15.60px;color:#111;font-weight:400;white-space:nowrap;transform-origin:0 0;transform:scaleX(1.0139);-webkit-text-stroke:0.25px #111;">#3 [3078-00003]</div>
<div style="left:247px;top:516px;width:114px;height:79px;background:#fff;border-top:1px solid #a0a0a0;border-left:1px solid #a0a0a0;border-right:1px solid #fff;border-bottom:1px solid #fff;box-sizing:border-box"></div>
<div style="left:248px;top:517px;width:112px;height:77px;border-top:1px solid #e8e8e8;border-left:1px solid #e8e8e8;box-sizing:border-box"></div>
<div style="left:249px;top:518px;width:58px;height:19px;background:#f0f0f0;border-top:1px solid #fff;border-left:1px solid #fff;border-right:1px solid #000;border-bottom:1px solid #000;box-sizing:border-box"></div>
<div style="left:307px;top:518px;width:52px;height:19px;background:#f0f0f0;border-top:1px solid #fff;border-left:1px solid #fff;border-right:1px solid #000;border-bottom:1px solid #000;box-sizing:border-box"></div>
<div style="left:251.00px;top:521.64px;font-size:12.5px;line-height:15.00px;color:#000;font-weight:400;white-space:nowrap;transform-origin:0 0;transform:scaleX(1.0198);">Statistics</div>
<div style="left:307px;top:537px;width:51px;height:19px;background:#0078d7"></div>
<div style="left:249px;top:555px;width:110px;height:1px;background:#d0d0d0"></div>
<div style="left:306px;top:537px;width:1px;height:19px;background:#d0d0d0"></div>
<div style="left:251.00px;top:541.14px;font-size:12.5px;line-height:15.00px;color:#000;font-weight:400;white-space:nowrap;transform-origin:0 0;transform:scaleX(1.0984);">Total</div>
<div style="left:309.00px;top:541.14px;font-size:12.5px;line-height:15.00px;color:#fff;font-weight:400;white-space:nowrap;transform-origin:0 0;transform:scaleX(0.9351);">15</div>
<div style="left:249px;top:574px;width:110px;height:1px;background:#d0d0d0"></div>
<div style="left:306px;top:556px;width:1px;height:19px;background:#d0d0d0"></div>
<div style="left:251.00px;top:560.14px;font-size:12.5px;line-height:15.00px;color:#000;font-weight:400;white-space:nowrap;transform-origin:0 0;transform:scaleX(1.0422);">Valid</div>
<div style="left:309.00px;top:560.14px;font-size:12.5px;line-height:15.00px;color:#000;font-weight:400;white-space:nowrap;transform-origin:0 0;transform:scaleX(0.9351);">15</div>
<div style="left:249px;top:593px;width:110px;height:1px;background:#d0d0d0"></div>
<div style="left:306px;top:575px;width:1px;height:19px;background:#d0d0d0"></div>
<div style="left:251.00px;top:579.14px;font-size:12.5px;line-height:15.00px;color:#000;font-weight:400;white-space:nowrap;transform-origin:0 0;transform:scaleX(0.9694);">Failed</div>
<div style="left:309.00px;top:579.14px;font-size:12.5px;line-height:15.00px;color:#000;font-weight:400;white-space:nowrap;transform-origin:0 0;transform:scaleX(1.0070);">0</div>
<div style="left:363px;top:343px;width:116px;height:255px;background:#696969"></div>
<svg style="position:absolute;left:377.5px;top:346.5px;" width="21" height="21" viewBox="0 0 21 21"><circle cx="10.5" cy="10.5" r="10" fill="#800000"/></svg>
<svg style="position:absolute;left:409.4px;top:346.5px;" width="21" height="21" viewBox="0 0 21 21"><circle cx="10.5" cy="10.5" r="10" fill="#008000"/></svg>
<svg style="position:absolute;left:443.4px;top:346.5px;" width="21" height="21" viewBox="0 0 21 21"><circle cx="10.5" cy="10.5" r="10" fill="#ffff00"/></svg>
<svg style="position:absolute;left:377px;top:369px;" width="88" height="88" viewBox="0 0 88 88"><defs><linearGradient id="sg" x1="0" y1="0" x2="1" y2="0"><stop offset="0" stop-color="#7a7a7a"/><stop offset="0.15" stop-color="#9a9a9a"/><stop offset="0.85" stop-color="#8a8a8a"/><stop offset="1" stop-color="#5a5a5a"/></linearGradient><linearGradient id="ic" x1="0" y1="0" x2="1" y2="1"><stop offset="0" stop-color="#000"/><stop offset="1" stop-color="#5a5a5a"/></linearGradient></defs><rect x="0.5" y="0.5" width="87" height="87" rx="1.5" fill="url(#sg)" stroke="#1a1a1a" stroke-width="1"/><rect x="2" y="2" width="84" height="84" fill="none" stroke="#a8a8a8" stroke-width="1"/><circle cx="6.5" cy="6" r="3.6" fill="#c0c0c0"/><circle cx="6.5" cy="6" r="2.9" fill="#9a9a9a" stroke="#111" stroke-width="1"/><circle cx="6.5" cy="6" r="1.1" fill="#b8b8b8"/><circle cx="81.5" cy="6" r="3.6" fill="#c0c0c0"/><circle cx="81.5" cy="6" r="2.9" fill="#9a9a9a" stroke="#111" stroke-width="1"/><circle cx="81.5" cy="6" r="1.1" fill="#b8b8b8"/><circle cx="6.5" cy="81" r="3.6" fill="#c0c0c0"/><circle cx="6.5" cy="81" r="2.9" fill="#9a9a9a" stroke="#111" stroke-width="1"/><circle cx="6.5" cy="81" r="1.1" fill="#b8b8b8"/><circle cx="81.5" cy="81" r="3.6" fill="#c0c0c0"/><circle cx="81.5" cy="81" r="2.9" fill="#9a9a9a" stroke="#111" stroke-width="1"/><circle cx="81.5" cy="81" r="1.1" fill="#b8b8b8"/><circle cx="16" cy="6" r="1.6" fill="#c8c8c8"/><circle cx="72" cy="6" r="1.6" fill="#c8c8c8"/><circle cx="17" cy="81" r="1.6" fill="#c8c8c8"/><circle cx="72" cy="81" r="1.6" fill="#c8c8c8"/><circle cx="83.5" cy="18" r="3" fill="none" stroke="#111" stroke-width="0.9"/><circle cx="83.5" cy="69.5" r="3" fill="none" stroke="#111" stroke-width="0.9"/><circle cx="4.5" cy="69.5" r="3" fill="none" stroke="#111" stroke-width="0.9"/><path d="M4.5 17.5 L8.5 20.5 L4.5 23.5Z" fill="#0000ff"/><rect x="10" y="10.5" width="67.5" height="66" fill="#8a8a8a"/><rect x="19" y="11" width="50" height="4.5" fill="#1a1a1a"/><rect x="19" y="72" width="50" height="4.5" fill="#1a1a1a"/><rect x="11" y="19" width="4.5" height="50" fill="#1a1a1a"/><rect x="72" y="19" width="4.5" height="50" fill="#1a1a1a"/><path d="M10.5 10.5 L77 10.5 M10.5 10.5 L10.5 76 M77 10.5 L77 76 M10.5 76 L77 76" stroke="#1a1a1a" stroke-width="1" fill="none"/><rect x="20.50" y="11.5" width="1.5" height="4" fill="#ffff00"/><rect x="20.50" y="15.5" width="1.5" height="3" fill="#f0f0f0"/><rect x="20.50" y="72" width="1.5" height="4" fill="#ffff00"/><rect x="20.50" y="69" width="1.5" height="3" fill="#f0f0f0"/><rect x="23.60" y="11.5" width="1.5" height="4" fill="#ffff00"/><rect x="23.60" y="15.5" width="1.5" height="3" fill="#f0f0f0"/><rect x="23.60" y="72" width="1.5" height="4" fill="#ffff00"/><rect x="23.60" y="69" width="1.5" height="3" fill="#f0f0f0"/><rect x="26.70" y="11.5" width="1.5" height="4" fill="#ffff00"/><rect x="26.70" y="15.5" width="1.5" height="3" fill="#f0f0f0"/><rect x="26.70" y="72" width="1.5" height="4" fill="#ffff00"/><rect x="26.70" y="69" width="1.5" height="3" fill="#f0f0f0"/><rect x="29.80" y="11.5" width="1.5" height="4" fill="#ffff00"/><rect x="29.80" y="15.5" width="1.5" height="3" fill="#f0f0f0"/><rect x="29.80" y="72" width="1.5" height="4" fill="#ffff00"/><rect x="29.80" y="69" width="1.5" height="3" fill="#f0f0f0"/><rect x="32.90" y="11.5" width="1.5" height="4" fill="#ffff00"/><rect x="32.90" y="15.5" width="1.5" height="3" fill="#f0f0f0"/><rect x="32.90" y="72" width="1.5" height="4" fill="#ffff00"/><rect x="32.90" y="69" width="1.5" height="3" fill="#f0f0f0"/><rect x="36.00" y="11.5" width="1.5" height="4" fill="#ffff00"/><rect x="36.00" y="15.5" width="1.5" height="3" fill="#f0f0f0"/><rect x="36.00" y="72" width="1.5" height="4" fill="#ffff00"/><rect x="36.00" y="69" width="1.5" height="3" fill="#f0f0f0"/><rect x="39.10" y="11.5" width="1.5" height="4" fill="#ffff00"/><rect x="39.10" y="15.5" width="1.5" height="3" fill="#f0f0f0"/><rect x="39.10" y="72" width="1.5" height="4" fill="#ffff00"/><rect x="39.10" y="69" width="1.5" height="3" fill="#f0f0f0"/><rect x="42.20" y="11.5" width="1.5" height="4" fill="#ffff00"/><rect x="42.20" y="15.5" width="1.5" height="3" fill="#f0f0f0"/><rect x="42.20" y="72" width="1.5" height="4" fill="#ffff00"/><rect x="42.20" y="69" width="1.5" height="3" fill="#f0f0f0"/><rect x="45.30" y="11.5" width="1.5" height="4" fill="#ffff00"/><rect x="45.30" y="15.5" width="1.5" height="3" fill="#f0f0f0"/><rect x="45.30" y="72" width="1.5" height="4" fill="#ffff00"/><rect x="45.30" y="69" width="1.5" height="3" fill="#f0f0f0"/><rect x="48.40" y="11.5" width="1.5" height="4" fill="#ffff00"/><rect x="48.40" y="15.5" width="1.5" height="3" fill="#f0f0f0"/><rect x="48.40" y="72" width="1.5" height="4" fill="#ffff00"/><rect x="48.40" y="69" width="1.5" height="3" fill="#f0f0f0"/><rect x="51.50" y="11.5" width="1.5" height="4" fill="#ffff00"/><rect x="51.50" y="15.5" width="1.5" height="3" fill="#f0f0f0"/><rect x="51.50" y="72" width="1.5" height="4" fill="#ffff00"/><rect x="51.50" y="69" width="1.5" height="3" fill="#f0f0f0"/><rect x="54.60" y="11.5" width="1.5" height="4" fill="#ffff00"/><rect x="54.60" y="15.5" width="1.5" height="3" fill="#f0f0f0"/><rect x="54.60" y="72" width="1.5" height="4" fill="#ffff00"/><rect x="54.60" y="69" width="1.5" height="3" fill="#f0f0f0"/><rect x="57.70" y="11.5" width="1.5" height="4" fill="#ffff00"/><rect x="57.70" y="15.5" width="1.5" height="3" fill="#f0f0f0"/><rect x="57.70" y="72" width="1.5" height="4" fill="#ffff00"/><rect x="57.70" y="69" width="1.5" height="3" fill="#f0f0f0"/><rect x="60.80" y="11.5" width="1.5" height="4" fill="#ffff00"/><rect x="60.80" y="15.5" width="1.5" height="3" fill="#f0f0f0"/><rect x="60.80" y="72" width="1.5" height="4" fill="#ffff00"/><rect x="60.80" y="69" width="1.5" height="3" fill="#f0f0f0"/><rect x="63.90" y="11.5" width="1.5" height="4" fill="#ffff00"/><rect x="63.90" y="15.5" width="1.5" height="3" fill="#f0f0f0"/><rect x="63.90" y="72" width="1.5" height="4" fill="#ffff00"/><rect x="63.90" y="69" width="1.5" height="3" fill="#f0f0f0"/><rect x="67.00" y="11.5" width="1.5" height="4" fill="#ffff00"/><rect x="67.00" y="15.5" width="1.5" height="3" fill="#f0f0f0"/><rect x="67.00" y="72" width="1.5" height="4" fill="#ffff00"/><rect x="67.00" y="69" width="1.5" height="3" fill="#f0f0f0"/><rect x="11.5" y="20.30" width="4" height="1.5" fill="#ffff00"/><rect x="15.5" y="20.30" width="3" height="1.5" fill="#f0f0f0"/><rect x="72" y="20.30" width="4" height="1.5" fill="#ffff00"/><rect x="69" y="20.30" width="3" height="1.5" fill="#f0f0f0"/><rect x="11.5" y="23.35" width="4" height="1.5" fill="#ffff00"/><rect x="15.5" y="23.35" width="3" height="1.5" fill="#f0f0f0"/><rect x="72" y="23.35" width="4" height="1.5" fill="#ffff00"/><rect x="69" y="23.35" width="3" height="1.5" fill="#f0f0f0"/><rect x="11.5" y="26.40" width="4" height="1.5" fill="#ffff00"/><rect x="15.5" y="26.40" width="3" height="1.5" fill="#f0f0f0"/><rect x="72" y="26.40" width="4" height="1.5" fill="#ffff00"/><rect x="69" y="26.40" width="3" height="1.5" fill="#f0f0f0"/><rect x="11.5" y="29.45" width="4" height="1.5" fill="#ffff00"/><rect x="15.5" y="29.45" width="3" height="1.5" fill="#f0f0f0"/><rect x="72" y="29.45" width="4" height="1.5" fill="#ffff00"/><rect x="69" y="29.45" width="3" height="1.5" fill="#f0f0f0"/><rect x="11.5" y="32.50" width="4" height="1.5" fill="#ffff00"/><rect x="15.5" y="32.50" width="3" height="1.5" fill="#f0f0f0"/><rect x="72" y="32.50" width="4" height="1.5" fill="#ffff00"/><rect x="69" y="32.50" width="3" height="1.5" fill="#f0f0f0"/><rect x="11.5" y="35.55" width="4" height="1.5" fill="#ffff00"/><rect x="15.5" y="35.55" width="3" height="1.5" fill="#f0f0f0"/><rect x="72" y="35.55" width="4" height="1.5" fill="#ffff00"/><rect x="69" y="35.55" width="3" height="1.5" fill="#f0f0f0"/><rect x="11.5" y="38.60" width="4" height="1.5" fill="#ffff00"/><rect x="15.5" y="38.60" width="3" height="1.5" fill="#f0f0f0"/><rect x="72" y="38.60" width="4" height="1.5" fill="#ffff00"/><rect x="69" y="38.60" width="3" height="1.5" fill="#f0f0f0"/><rect x="11.5" y="41.65" width="4" height="1.5" fill="#ffff00"/><rect x="15.5" y="41.65" width="3" height="1.5" fill="#f0f0f0"/><rect x="72" y="41.65" width="4" height="1.5" fill="#ffff00"/><rect x="69" y="41.65" width="3" height="1.5" fill="#f0f0f0"/><rect x="11.5" y="44.70" width="4" height="1.5" fill="#ffff00"/><rect x="15.5" y="44.70" width="3" height="1.5" fill="#f0f0f0"/><rect x="72" y="44.70" width="4" height="1.5" fill="#ffff00"/><rect x="69" y="44.70" width="3" height="1.5" fill="#f0f0f0"/><rect x="11.5" y="47.75" width="4" height="1.5" fill="#ffff00"/><rect x="15.5" y="47.75" width="3" height="1.5" fill="#f0f0f0"/><rect x="72" y="47.75" width="4" height="1.5" fill="#ffff00"/><rect x="69" y="47.75" width="3" height="1.5" fill="#f0f0f0"/><rect x="11.5" y="50.80" width="4" height="1.5" fill="#ffff00"/><rect x="15.5" y="50.80" width="3" height="1.5" fill="#f0f0f0"/><rect x="72" y="50.80" width="4" height="1.5" fill="#ffff00"/><rect x="69" y="50.80" width="3" height="1.5" fill="#f0f0f0"/><rect x="11.5" y="53.85" width="4" height="1.5" fill="#ffff00"/><rect x="15.5" y="53.85" width="3" height="1.5" fill="#f0f0f0"/><rect x="72" y="53.85" width="4" height="1.5" fill="#ffff00"/><rect x="69" y="53.85" width="3" height="1.5" fill="#f0f0f0"/><rect x="11.5" y="56.90" width="4" height="1.5" fill="#ffff00"/><rect x="15.5" y="56.90" width="3" height="1.5" fill="#f0f0f0"/><rect x="72" y="56.90" width="4" height="1.5" fill="#ffff00"/><rect x="69" y="56.90" width="3" height="1.5" fill="#f0f0f0"/><rect x="11.5" y="59.95" width="4" height="1.5" fill="#ffff00"/><rect x="15.5" y="59.95" width="3" height="1.5" fill="#f0f0f0"/><rect x="72" y="59.95" width="4" height="1.5" fill="#ffff00"/><rect x="69" y="59.95" width="3" height="1.5" fill="#f0f0f0"/><rect x="11.5" y="63.00" width="4" height="1.5" fill="#ffff00"/><rect x="15.5" y="63.00" width="3" height="1.5" fill="#f0f0f0"/><rect x="72" y="63.00" width="4" height="1.5" fill="#ffff00"/><rect x="69" y="63.00" width="3" height="1.5" fill="#f0f0f0"/><rect x="11.5" y="66.05" width="4" height="1.5" fill="#ffff00"/><rect x="15.5" y="66.05" width="3" height="1.5" fill="#f0f0f0"/><rect x="72" y="66.05" width="4" height="1.5" fill="#ffff00"/><rect x="69" y="66.05" width="3" height="1.5" fill="#f0f0f0"/><path d="M11.5 18.5 L14.5 18.5 L18.5 14.5 L18.5 11.5 M13.5 13.5 L16.5 16.5" stroke="#1a1a1a" stroke-width="1.3" fill="none"/><rect x="11.0" y="11.0" width="3" height="3" fill="#3a3a4a"/><path d="M76 18.5 L73 18.5 L69 14.5 L69 11.5 M74 13.5 L71 16.5" stroke="#1a1a1a" stroke-width="1.3" fill="none"/><rect x="73.5" y="11.0" width="3" height="3" fill="#3a3a4a"/><path d="M11.5 68 L14.5 68 L18.5 72 L18.5 75 M13.5 73 L16.5 70" stroke="#1a1a1a" stroke-width="1.3" fill="none"/><rect x="11.0" y="72.5" width="3" height="3" fill="#3a3a4a"/><path d="M76 68 L73 68 L69 72 L69 75 M74 73 L71 70" stroke="#1a1a1a" stroke-width="1.3" fill="none"/><rect x="73.5" y="72.5" width="3" height="3" fill="#3a3a4a"/><rect x="18.5" y="18.5" width="50" height="50" fill="url(#ic)"/><text x="43" y="44" font-family="Liberation Serif" font-style="italic" font-weight="700" font-size="20" fill="#9e9a94" text-anchor="middle">IC</text><text x="44" y="85" font-family="Liberation Sans" font-size="13" fill="#1a1a3a" text-anchor="middle" textLength="51" lengthAdjust="spacingAndGlyphs">Occupied</text></svg>
<svg style="position:absolute;left:377px;top:459px;" width="88" height="41" viewBox="0 0 88 41"><defs><linearGradient id="lg" x1="0" y1="0" x2="0" y2="1"><stop offset="0" stop-color="#5a5a5a"/><stop offset="0.5" stop-color="#8c8c8c"/><stop offset="1" stop-color="#606060"/></linearGradient></defs><rect x="0.5" y="0.5" width="87" height="39.5" fill="url(#lg)" stroke="#111" stroke-width="1"/><rect x="0" y="40" width="88" height="1" fill="#fff"/><rect x="0.5" y="13" width="87" height="5" fill="#7a7a7a" stroke="#333" stroke-width="0.8"/><rect x="0" y="13" width="14" height="5" fill="#fff"/><path d="M2 14.5 L11 15.5 L2 16.5Z" fill="#e0d000"/><rect x="2" y="15" width="9" height="1" fill="#555"/><rect x="74" y="13" width="14" height="5" fill="#fff"/><path d="M77 14.5 L86 15.5 L77 16.5Z" fill="#e0d000"/><rect x="77" y="15" width="9" height="1" fill="#555"/><rect x="19.5" y="7.5" width="49" height="20" fill="#7c7c84" stroke="#111" stroke-width="1"/><line x1="19.5" y1="17.0" x2="68.5" y2="17.0" stroke="#222" stroke-width="1"/><rect x="21" y="8.0" width="1" height="19" fill="#ffff00" shape-rendering="crispEdges"/><rect x="24" y="8.0" width="1" height="19" fill="#ffff00" shape-rendering="crispEdges"/><rect x="27" y="8.0" width="1" height="19" fill="#ffff00" shape-rendering="crispEdges"/><rect x="30" y="8.0" width="1" height="19" fill="#ffff00" shape-rendering="crispEdges"/><rect x="33" y="8.0" width="1" height="19" fill="#ffff00" shape-rendering="crispEdges"/><rect x="36" y="8.0" width="1" height="19" fill="#ffff00" shape-rendering="crispEdges"/><rect x="39" y="8.0" width="1" height="19" fill="#ffff00" shape-rendering="crispEdges"/><rect x="42" y="8.0" width="1" height="19" fill="#ffff00" shape-rendering="crispEdges"/><rect x="45" y="8.0" width="1" height="19" fill="#ffff00" shape-rendering="crispEdges"/><rect x="48" y="8.0" width="1" height="19" fill="#ffff00" shape-rendering="crispEdges"/><rect x="51" y="8.0" width="1" height="19" fill="#ffff00" shape-rendering="crispEdges"/><rect x="54" y="8.0" width="1" height="19" fill="#ffff00" shape-rendering="crispEdges"/><rect x="57" y="8.0" width="1" height="19" fill="#ffff00" shape-rendering="crispEdges"/><rect x="60" y="8.0" width="1" height="19" fill="#ffff00" shape-rendering="crispEdges"/><rect x="63" y="8.0" width="1" height="19" fill="#ffff00" shape-rendering="crispEdges"/><rect x="66" y="8.0" width="1" height="19" fill="#ffff00" shape-rendering="crispEdges"/><text x="44" y="37.5" font-family="Liberation Sans" font-size="13" fill="#1a1a3a" text-anchor="middle" textLength="37" lengthAdjust="spacingAndGlyphs">Closed</text></svg>
<div style="left:372.00px;top:500.85px;font-size:13px;line-height:15.60px;color:#111;font-weight:400;white-space:nowrap;transform-origin:0 0;transform:scaleX(1.0139);-webkit-text-stroke:0.25px #111;">#4 [3078-00004]</div>
<div style="left:364px;top:516px;width:114px;height:79px;background:#fff;border-top:1px solid #a0a0a0;border-left:1px solid #a0a0a0;border-right:1px solid #fff;border-bottom:1px solid #fff;box-sizing:border-box"></div>
<div style="left:365px;top:517px;width:112px;height:77px;border-top:1px solid #e8e8e8;border-left:1px solid #e8e8e8;box-sizing:border-box"></div>
<div style="left:366px;top:518px;width:58px;height:19px;background:#f0f0f0;border-top:1px solid #fff;border-left:1px solid #fff;border-right:1px solid #000;border-bottom:1px solid #000;box-sizing:border-box"></div>
<div style="left:424px;top:518px;width:52px;height:19px;background:#f0f0f0;border-top:1px solid #fff;border-left:1px solid #fff;border-right:1px solid #000;border-bottom:1px solid #000;box-sizing:border-box"></div>
<div style="left:368.00px;top:521.64px;font-size:12.5px;line-height:15.00px;color:#000;font-weight:400;white-space:nowrap;transform-origin:0 0;transform:scaleX(1.0198);">Statistics</div>
<div style="left:424px;top:537px;width:51px;height:19px;background:#0078d7"></div>
<div style="left:366px;top:555px;width:110px;height:1px;background:#d0d0d0"></div>
<div style="left:423px;top:537px;width:1px;height:19px;background:#d0d0d0"></div>
<div style="left:368.00px;top:541.14px;font-size:12.5px;line-height:15.00px;color:#000;font-weight:400;white-space:nowrap;transform-origin:0 0;transform:scaleX(1.0984);">Total</div>
<div style="left:426.00px;top:541.14px;font-size:12.5px;line-height:15.00px;color:#fff;font-weight:400;white-space:nowrap;transform-origin:0 0;transform:scaleX(0.9351);">15</div>
<div style="left:366px;top:574px;width:110px;height:1px;background:#d0d0d0"></div>
<div style="left:423px;top:556px;width:1px;height:19px;background:#d0d0d0"></div>
<div style="left:368.00px;top:560.14px;font-size:12.5px;line-height:15.00px;color:#000;font-weight:400;white-space:nowrap;transform-origin:0 0;transform:scaleX(1.0422);">Valid</div>
<div style="left:426.00px;top:560.14px;font-size:12.5px;line-height:15.00px;color:#000;font-weight:400;white-space:nowrap;transform-origin:0 0;transform:scaleX(0.9351);">15</div>
<div style="left:366px;top:593px;width:110px;height:1px;background:#d0d0d0"></div>
<div style="left:423px;top:575px;width:1px;height:19px;background:#d0d0d0"></div>
<div style="left:368.00px;top:579.14px;font-size:12.5px;line-height:15.00px;color:#000;font-weight:400;white-space:nowrap;transform-origin:0 0;transform:scaleX(0.9694);">Failed</div>
<div style="left:426.00px;top:579.14px;font-size:12.5px;line-height:15.00px;color:#000;font-weight:400;white-space:nowrap;transform-origin:0 0;transform:scaleX(1.0070);">0</div>
<div style="left:504px;top:330px;width:328px;height:275px;background:#dae6f3"></div>
<div style="left:507px;top:333px;width:322px;height:242px;background:#fff;border:1px solid #7a7a7a;box-sizing:border-box"></div>
<svg style="position:absolute;left:508px;top:334px;" width="321" height="241" viewBox="0 0 321 241"><defs><filter id="bl"><feGaussianBlur stdDeviation="0.4"/></filter></defs><rect x="121" y="64.5" width="81" height="115" fill="#727272"/><line x1="121" y1="62.5" x2="202" y2="62.5" stroke="#a0a0a0" stroke-width="1.2" stroke-dasharray="1 1.1"/><line x1="121" y1="181" x2="202" y2="181" stroke="#a0a0a0" stroke-width="1.2" stroke-dasharray="1 1.1"/><circle cx="128.3" cy="70.3" r="2.8" fill="#4e4e4e"/><circle cx="189.6" cy="169.4" r="8" fill="#555"/><line x1="160.5" y1="0" x2="160.5" y2="241" stroke="#000" stroke-width="1"/><line x1="0" y1="120.5" x2="321" y2="120.5" stroke="#000" stroke-width="1"/></svg>
<div style="left:508px;top:578px;width:320px;height:23px;background:#fff;border-top:2px solid #696969;border-left:2px solid #696969;border-bottom:1px solid #fff;border-right:1px solid #fff;box-sizing:border-box"></div>
<div style="left:510.60px;top:581.85px;font-size:13px;line-height:15.60px;color:#000;font-weight:400;white-space:nowrap;transform-origin:0 0;transform:scaleX(0.9311);">DownCam</div>
<div style="left:810px;top:580px;width:17px;height:19px;background:#f0f0f0;border-top:1px solid #fff;border-left:1px solid #fff;border-right:1px solid #696969;border-bottom:1px solid #696969;box-sizing:border-box;box-shadow:inset -1px -1px 0 #a0a0a0, inset 1px 1px 0 #e3e3e3"></div>
<svg style="position:absolute;left:813px;top:586px;" width="11" height="7" viewBox="0 0 11 7"><path d="M1 1 L10 1 L5.5 6Z" fill="#000"/></svg>
<div style="left:835px;top:314px;width:185px;height:155px;background:#fff;border-top:1px solid #a0a0a0;border-left:1px solid #a0a0a0;border-right:1px solid #fff;border-bottom:1px solid #fff;box-sizing:border-box"></div>
<div style="left:836px;top:315px;width:183px;height:153px;border-top:1px solid #696969;border-left:1px solid #696969;border-right:1px solid #e3e3e3;border-bottom:1px solid #e3e3e3;box-sizing:border-box"></div>
<div style="left:837px;top:316px;width:120px;height:19px;background:#f0f0f0;border-top:1px solid #fff;border-left:1px solid #fff;border-right:1px solid #000;border-bottom:1px solid #000;box-sizing:border-box"></div>
<div style="left:957px;top:316px;width:62px;height:19px;background:#f0f0f0;border-top:1px solid #fff;border-left:1px solid #fff;border-right:1px solid #000;border-bottom:1px solid #000;box-sizing:border-box"></div>
<div style="left:839.00px;top:319.64px;font-size:12.5px;line-height:15.00px;color:#000;font-weight:400;white-space:nowrap;transform-origin:0 0;transform:scaleX(1.0198);">Statistics</div>
<div style="left:837px;top:353px;width:181px;height:1px;background:#d0d0d0"></div>
<div style="left:956px;top:335px;width:1px;height:19px;background:#d0d0d0"></div>
<div style="left:839.00px;top:339.14px;font-size:12.5px;line-height:15.00px;color:#000;font-weight:400;white-space:nowrap;transform-origin:0 0;transform:scaleX(0.9652);">Processed</div>
<div style="left:959.00px;top:339.14px;font-size:12.5px;line-height:15.00px;color:#000;font-weight:400;white-space:nowrap;transform-origin:0 0;transform:scaleX(0.9351);">62</div>
<div style="left:837px;top:372px;width:181px;height:1px;background:#d0d0d0"></div>
<div style="left:956px;top:354px;width:1px;height:19px;background:#d0d0d0"></div>
<div style="left:839.00px;top:358.14px;font-size:12.5px;line-height:15.00px;color:#000;font-weight:400;white-space:nowrap;transform-origin:0 0;transform:scaleX(0.9354);">Passed</div>
<div style="left:959.00px;top:358.14px;font-size:12.5px;line-height:15.00px;color:#000;font-weight:400;white-space:nowrap;transform-origin:0 0;transform:scaleX(0.9351);">61</div>
<div style="left:837px;top:391px;width:181px;height:1px;background:#d0d0d0"></div>
<div style="left:956px;top:373px;width:1px;height:19px;background:#d0d0d0"></div>
<div style="left:839.00px;top:377.14px;font-size:12.5px;line-height:15.00px;color:#000;font-weight:400;white-space:nowrap;transform-origin:0 0;transform:scaleX(0.9694);">Failed</div>
<div style="left:959.00px;top:377.14px;font-size:12.5px;line-height:15.00px;color:#000;font-weight:400;white-space:nowrap;transform-origin:0 0;transform:scaleX(0.8632);">1</div>
<div style="left:837px;top:410px;width:181px;height:1px;background:#d0d0d0"></div>
<div style="left:956px;top:392px;width:1px;height:19px;background:#d0d0d0"></div>
<div style="left:839.00px;top:396.14px;font-size:12.5px;line-height:15.00px;color:#000;font-weight:400;white-space:nowrap;transform-origin:0 0;transform:scaleX(1.0168);">Throughput</div>
<div style="left:959.00px;top:396.14px;font-size:12.5px;line-height:15.00px;color:#000;font-weight:400;white-space:nowrap;transform-origin:0 0;transform:scaleX(0.9858);">468 UPH</div>
<div style="left:837px;top:429px;width:181px;height:1px;background:#d0d0d0"></div>
<div style="left:956px;top:411px;width:1px;height:19px;background:#d0d0d0"></div>
<div style="left:839.00px;top:415.14px;font-size:12.5px;line-height:15.00px;color:#000;font-weight:400;white-space:nowrap;transform-origin:0 0;transform:scaleX(1.0192);">Time elapsed</div>
<div style="left:959.00px;top:415.14px;font-size:12.5px;line-height:15.00px;color:#000;font-weight:400;white-space:nowrap;transform-origin:0 0;transform:scaleX(1.0688);">00:07:57</div>
<div style="left:837px;top:448px;width:181px;height:1px;background:#d0d0d0"></div>
<div style="left:956px;top:430px;width:1px;height:19px;background:#d0d0d0"></div>
<div style="left:839.00px;top:434.14px;font-size:12.5px;line-height:15.00px;color:#000;font-weight:400;white-space:nowrap;transform-origin:0 0;transform:scaleX(1.0201);">Estimated finish</div>
<div style="left:959.00px;top:434.14px;font-size:12.5px;line-height:15.00px;color:#000;font-weight:400;white-space:nowrap;transform-origin:0 0;transform:scaleX(1.0688);">00:16:40</div>
<div style="left:837px;top:467px;width:181px;height:1px;background:#d0d0d0"></div>
<div style="left:956px;top:449px;width:1px;height:19px;background:#d0d0d0"></div>
<div style="left:839.00px;top:453.14px;font-size:12.5px;line-height:15.00px;color:#000;font-weight:400;white-space:nowrap;transform-origin:0 0;transform:scaleX(0.9935);">Remains</div>
<div style="left:959.00px;top:453.14px;font-size:12.5px;line-height:15.00px;color:#000;font-weight:400;white-space:nowrap;transform-origin:0 0;transform:scaleX(0.9591);">130</div>
<div style="left:836px;top:479px;width:185px;height:125px;border:1px solid #fff;box-sizing:border-box"></div>
<div style="left:835px;top:478px;width:185px;height:125px;border:1px solid #a0a0a0;box-sizing:border-box"></div>
<div style="left:842px;top:475px;width:114.00000000000001px;height:7px;background:#f0f0f0"></div>
<div style="left:843.00px;top:471.64px;font-size:12.5px;line-height:15.00px;color:#000;font-weight:400;white-space:nowrap;transform-origin:0 0;transform:scaleX(1.0268);">Peripheral Interface</div>
<div style="left:838px;top:486px;width:178px;height:35px;background:#f0f0f0;border-top:1px solid #fff;border-left:1px solid #fff;border-right:1px solid #696969;border-bottom:1px solid #696969;box-sizing:border-box;box-shadow:inset -1px -1px 0 #a0a0a0, inset 1px 1px 0 #e3e3e3"></div>
<div style="left:881.00px;top:495.85px;font-size:13px;line-height:15.60px;color:#000;font-weight:400;white-space:nowrap;transform-origin:0 0;transform:scaleX(0.9297);">Start PG4UWMC</div>
<div style="left:838px;top:525px;width:178px;height:35px;background:#f0f0f0;border-top:1px solid #fff;border-left:1px solid #fff;border-right:1px solid #696969;border-bottom:1px solid #696969;box-sizing:border-box;box-shadow:inset -1px -1px 0 #a0a0a0, inset 1px 1px 0 #e3e3e3"></div>
<div style="left:891.50px;top:534.85px;font-size:13px;line-height:15.60px;color:#000;font-weight:400;white-space:nowrap;transform-origin:0 0;transform:scaleX(0.9828);">(Re)Init Pipe</div>
<div style="left:838px;top:564px;width:178px;height:35px;background:#f0f0f0;border-top:1px solid #fff;border-left:1px solid #fff;border-right:1px solid #696969;border-bottom:1px solid #696969;box-sizing:border-box;box-shadow:inset -1px -1px 0 #a0a0a0, inset 1px 1px 0 #e3e3e3"></div>
<div style="left:874.50px;top:573.85px;font-size:13px;line-height:15.60px;color:#000;font-weight:400;white-space:nowrap;transform-origin:0 0;transform:scaleX(0.9887);">Driver Initialization</div>
<svg style="position:absolute;left:20px;top:646px;" width="40" height="40" viewBox="0 0 40 40"><circle cx="20" cy="20" r="17" fill="none" stroke="#4a7cc8" stroke-width="4.6"/><circle cx="20" cy="20" r="17" fill="none" stroke="#8cb8f0" stroke-width="2.6"/><path d="M9.3 20 L15.6 13.5 L15.6 18.3 L29.9 18.3 L29.9 21.7 L15.6 21.7 L15.6 26.5Z" fill="#8cb8f0" stroke="#4a7cc8" stroke-width="0.9" stroke-linejoin="miter"/></svg>
<svg style="position:absolute;left:30px;top:709px;" width="82" height="82" viewBox="0 0 82 82"><circle cx="41" cy="41" r="40" fill="#f44336"/><path d="M22.52 18.98 A28.75 28.75 0 0 1 62.70 22.14" fill="none" stroke="#fccbcb" stroke-width="6.5"/><path d="M56.66 27.39 L68.74 16.89 L69.91 30.44Z" fill="#fccbcb"/><path d="M69.31 36.01 A28.75 28.75 0 0 1 46.49 69.22" fill="none" stroke="#fccbcb" stroke-width="6.5"/><path d="M44.96 61.37 L48.01 77.07 L35.69 71.32Z" fill="#fccbcb"/><path d="M31.17 68.02 A28.75 28.75 0 0 1 13.82 31.64" fill="none" stroke="#fccbcb" stroke-width="6.5"/><path d="M21.38 34.24 L6.25 29.04 L17.40 21.24Z" fill="#fccbcb"/></svg>
<div style="left:78px;top:623px;width:116px;height:78px;border:1px solid #fff;box-sizing:border-box"></div>
<div style="left:77px;top:622px;width:116px;height:78px;border:1px solid #a0a0a0;box-sizing:border-box"></div>
<div style="left:83.4px;top:619px;width:92.5px;height:7px;background:#f0f0f0"></div>
<div style="left:84.40px;top:617.44px;font-size:12.5px;line-height:15.00px;color:#000;font-weight:400;white-space:nowrap;transform-origin:0 0;transform:scaleX(0.8684);">Reinit driver again:</div>
<svg style="position:absolute;left:86px;top:635px;" width="12" height="12" viewBox="0 0 12 12"><circle cx="6" cy="6" r="5" fill="#f0f0f0" stroke="#c0c0c0" stroke-width="1"/><path d="M2.5 9.5 A5 5 0 0 1 9.5 2.5" fill="none" stroke="#a0a0a0" stroke-width="1.2"/><circle cx="6" cy="6" r="1.8" fill="#a0a0a0"/></svg>
<div style="left:102.90px;top:635.04px;font-size:12.5px;line-height:15.00px;color:#a0a0a0;font-weight:400;white-space:nowrap;transform-origin:0 0;transform:scaleX(0.8132);">None</div>
<svg style="position:absolute;left:86px;top:656px;" width="12" height="12" viewBox="0 0 12 12"><circle cx="6" cy="6" r="5" fill="#f0f0f0" stroke="#c0c0c0" stroke-width="1"/><path d="M2.5 9.5 A5 5 0 0 1 9.5 2.5" fill="none" stroke="#a0a0a0" stroke-width="1.2"/></svg>
<div style="left:102.90px;top:656.64px;font-size:12.5px;line-height:15.00px;color:#a0a0a0;font-weight:400;white-space:nowrap;transform-origin:0 0;transform:scaleX(0.8708);">Input replacing</div>
<svg style="position:absolute;left:86px;top:679px;" width="12" height="12" viewBox="0 0 12 12"><circle cx="6" cy="6" r="5" fill="#f0f0f0" stroke="#c0c0c0" stroke-width="1"/><path d="M2.5 9.5 A5 5 0 0 1 9.5 2.5" fill="none" stroke="#a0a0a0" stroke-width="1.2"/></svg>
<div style="left:102.90px;top:678.84px;font-size:12.5px;line-height:15.00px;color:#a0a0a0;font-weight:400;white-space:nowrap;transform-origin:0 0;transform:scaleX(0.8924);">Target</div>
<div style="left:138px;top:676px;width:48px;height:20px;background:#fff;border-top:2px solid #696969;border-left:2px solid #696969;border-bottom:1px solid #fff;border-right:1px solid #fff;box-sizing:border-box"></div>
<div style="left:169px;top:678px;width:16px;height:8.5px;background:#f0f0f0;border-top:1px solid #fff;border-left:1px solid #fff;border-right:1px solid #696969;border-bottom:1px solid #696969;box-sizing:border-box"></div>
<div style="left:169px;top:686.5px;width:16px;height:8.5px;background:#f0f0f0;border-top:1px solid #fff;border-left:1px solid #fff;border-right:1px solid #696969;border-bottom:1px solid #696969;box-sizing:border-box"></div>
<svg style="position:absolute;left:174.0px;top:680.75px;" width="6" height="3" viewBox="0 0 6 3"><path d="M0.5 2.5 L3 0.5 L5.5 2.5" fill="none" stroke="#a0a0a0" stroke-width="0.8"/></svg>
<svg style="position:absolute;left:174.0px;top:689.25px;" width="6" height="3" viewBox="0 0 6 3"><path d="M0.5 0.5 L3 2.5 L5.5 0.5" fill="none" stroke="#a0a0a0" stroke-width="0.8"/></svg>
<div style="left:141.50px;top:679.14px;font-size:12.5px;line-height:15.00px;color:#7a7a7a;font-weight:400;white-space:nowrap;transform-origin:0 0;">1</div>
<div style="left:205.20px;top:618.84px;font-size:12.5px;line-height:15.00px;color:#000;font-weight:400;white-space:nowrap;transform-origin:0 0;transform:scaleX(0.8543);">Trays</div>
<div style="left:238px;top:617px;width:67px;height:20px;background:#fff;border-top:2px solid #696969;border-left:2px solid #696969;border-bottom:1px solid #fff;border-right:1px solid #fff;box-sizing:border-box"></div>
<div style="left:287px;top:619px;width:17px;height:8.5px;background:#f0f0f0;border-top:1px solid #fff;border-left:1px solid #fff;border-right:1px solid #696969;border-bottom:1px solid #696969;box-sizing:border-box"></div>
<div style="left:287px;top:627.5px;width:17px;height:8.5px;background:#f0f0f0;border-top:1px solid #fff;border-left:1px solid #fff;border-right:1px solid #696969;border-bottom:1px solid #696969;box-sizing:border-box"></div>
<svg style="position:absolute;left:292.5px;top:621.75px;" width="6" height="3" viewBox="0 0 6 3"><path d="M0.5 2.5 L3 0.5 L5.5 2.5" fill="none" stroke="#a0a0a0" stroke-width="0.8"/></svg>
<svg style="position:absolute;left:292.5px;top:630.25px;" width="6" height="3" viewBox="0 0 6 3"><path d="M0.5 0.5 L3 2.5 L5.5 0.5" fill="none" stroke="#a0a0a0" stroke-width="0.8"/></svg>
<div style="left:241.50px;top:620.14px;font-size:12.5px;line-height:15.00px;color:#7a7a7a;font-weight:400;white-space:nowrap;transform-origin:0 0;">2</div>
<div style="left:204px;top:647px;width:101px;height:53px;border:1px solid #fff;box-sizing:border-box"></div>
<div style="left:203px;top:646px;width:101px;height:53px;border:1px solid #a0a0a0;box-sizing:border-box"></div>
<div style="left:209.7px;top:643px;width:89.0px;height:7px;background:#f0f0f0"></div>
<div style="left:210.70px;top:639.94px;font-size:12.5px;line-height:15.00px;color:#000;font-weight:400;white-space:nowrap;transform-origin:0 0;transform:scaleX(0.8636);">Lock start position</div>
<div style="left:220px;top:659px;width:13px;height:13px;background:#fff;border-top:1px solid #a0a0a0;border-left:1px solid #a0a0a0;border-bottom:1px solid #fff;border-right:1px solid #fff;box-sizing:border-box;box-shadow:inset 1px 1px 0 #696969, inset -1px -1px 0 #e3e3e3"></div>
<div style="left:237.70px;top:658.04px;font-size:12.5px;line-height:15.00px;color:#000;font-weight:400;white-space:nowrap;transform-origin:0 0;transform:scaleX(0.8448);">Media In</div>
<div style="left:220px;top:679px;width:13px;height:13px;background:#fff;border-top:1px solid #a0a0a0;border-left:1px solid #a0a0a0;border-bottom:1px solid #fff;border-right:1px solid #fff;box-sizing:border-box;box-shadow:inset 1px 1px 0 #696969, inset -1px -1px 0 #e3e3e3"></div>
<div style="left:237.70px;top:677.74px;font-size:12.5px;line-height:15.00px;color:#000;font-weight:400;white-space:nowrap;transform-origin:0 0;transform:scaleX(0.8498);">Media Out</div>
<div style="left:317px;top:622px;width:182px;height:78px;background:#fff;border-top:1px solid #a0a0a0;border-left:1px solid #a0a0a0;border-right:1px solid #fff;border-bottom:1px solid #fff;box-sizing:border-box"></div>
<div style="left:318px;top:623px;width:180px;height:76px;border-top:1px solid #696969;border-left:1px solid #696969;border-right:1px solid #e3e3e3;border-bottom:1px solid #e3e3e3;box-sizing:border-box"></div>
<div style="left:319px;top:624px;width:120px;height:18px;background:#f0f0f0;border-top:1px solid #fff;border-left:1px solid #fff;border-right:1px solid #000;border-bottom:1px solid #000;box-sizing:border-box"></div>
<div style="left:439px;top:624px;width:59px;height:18px;background:#f0f0f0;border-top:1px solid #fff;border-left:1px solid #fff;border-right:1px solid #000;border-bottom:1px solid #000;box-sizing:border-box"></div>
<div style="left:321.00px;top:627.14px;font-size:12.5px;line-height:15.00px;color:#000;font-weight:400;white-space:nowrap;transform-origin:0 0;transform:scaleX(0.9931);">Run settings</div>
<div style="left:319px;top:660px;width:178px;height:1px;background:#d0d0d0"></div>
<div style="left:438px;top:642px;width:1px;height:19px;background:#d0d0d0"></div>
<div style="left:321.00px;top:646.14px;font-size:12.5px;line-height:15.00px;color:#000;font-weight:400;white-space:nowrap;transform-origin:0 0;transform:scaleX(1.0651);">Target</div>
<div style="left:441.00px;top:646.14px;font-size:12.5px;line-height:15.00px;color:#000;font-weight:400;white-space:nowrap;transform-origin:0 0;transform:scaleX(0.9591);">192</div>
<div style="left:319px;top:679px;width:178px;height:1px;background:#d0d0d0"></div>
<div style="left:438px;top:661px;width:1px;height:19px;background:#d0d0d0"></div>
<div style="left:321.00px;top:665.14px;font-size:12.5px;line-height:15.00px;color:#000;font-weight:400;white-space:nowrap;transform-origin:0 0;transform:scaleX(1.0201);">Media IN start pos.</div>
<div style="left:441.00px;top:665.14px;font-size:12.5px;line-height:15.00px;color:#000;font-weight:400;white-space:nowrap;transform-origin:0 0;transform:scaleX(0.8632);">1</div>
<div style="left:319px;top:698px;width:178px;height:1px;background:#d0d0d0"></div>
<div style="left:438px;top:680px;width:1px;height:19px;background:#d0d0d0"></div>
<div style="left:321.00px;top:684.14px;font-size:12.5px;line-height:15.00px;color:#000;font-weight:400;white-space:nowrap;transform-origin:0 0;transform:scaleX(0.9869);">Media OUT start pos.</div>
<div style="left:441.00px;top:684.14px;font-size:12.5px;line-height:15.00px;color:#000;font-weight:400;white-space:nowrap;transform-origin:0 0;transform:scaleX(0.8632);">1</div>
<div style="left:142px;top:715px;width:358px;height:82px;border:1px solid #fff;box-sizing:border-box"></div>
<div style="left:141px;top:714px;width:358px;height:82px;border:1px solid #a0a0a0;box-sizing:border-box"></div>
<div style="left:148.6px;top:711px;width:122.0px;height:7px;background:#f0f0f0"></div>
<div style="left:149.60px;top:707.75px;font-size:13px;line-height:15.60px;color:#000;font-weight:700;white-space:nowrap;transform-origin:0 0;transform:scaleX(1.0193);">Main Control Panel</div>
<svg style="position:absolute;left:170px;top:728px;" width="58" height="58" viewBox="0 0 58 58"><path d="M16.5 1.5 L40.5 1.5 L56 17 L56 40.5 L40.5 56 L16.5 56 L1.5 40.5 L1.5 17Z" fill="#f58b8b" stroke="#e46a6a" stroke-width="1"/><text x="29" y="34.5" font-family="Liberation Sans" font-weight="700" font-size="16.5" fill="#fff" text-anchor="middle" textLength="46" lengthAdjust="spacingAndGlyphs">STOP</text></svg>
<svg style="position:absolute;left:246px;top:725px;" width="64" height="64" viewBox="0 0 64 64"><circle cx="32" cy="32" r="31" fill="#e04c62"/><rect x="17.5" y="17.5" width="29" height="29" rx="1.5" fill="#fff"/></svg>
<svg style="position:absolute;left:328px;top:725px;" width="64" height="64" viewBox="0 0 64 64"><circle cx="32" cy="32" r="30.8" fill="#e3a81b"/><rect x="20" y="16" width="10" height="32" rx="1.5" fill="#fff"/><rect x="33.7" y="16" width="10" height="32" rx="1.5" fill="#fff"/></svg>
<svg style="position:absolute;left:411px;top:725px;" width="64" height="64" viewBox="0 0 64 64"><circle cx="32" cy="32" r="30.5" fill="#c3c3c3" stroke="#2ec4a8" stroke-width="0.8"/><path d="M23.5 18 Q22.5 16.5 24.5 17 L48 30.5 Q49.5 32 48 33.5 L24.5 47 Q22.5 47.5 23.5 46Z" fill="#fff" stroke="#9ee0d0" stroke-width="0.6"/></svg>
<div style="left:508px;top:613px;width:512px;height:184px;border:1px solid #fff;box-sizing:border-box"></div>
<div style="left:507px;top:612px;width:512px;height:184px;border:1px solid #a0a0a0;box-sizing:border-box"></div>
<div style="left:513px;top:609px;width:71.0px;height:7px;background:#f0f0f0"></div>
<div style="left:514.00px;top:606.14px;font-size:12.5px;line-height:15.00px;color:#000;font-weight:400;white-space:nowrap;transform-origin:0 0;transform:scaleX(1.0239);">Activity Log:</div>
<div style="left:511px;top:624px;width:503px;height:167px;background:#fff;border-top:2px solid #696969;border-left:2px solid #696969;border-bottom:1px solid #e3e3e3;border-right:1px solid #e3e3e3;box-sizing:border-box"></div>
<div style="left:512.50px;top:626.53px;font-size:11px;line-height:13.20px;color:#000;font-weight:400;white-space:nowrap;transform-origin:0 0;transform:scaleX(0.9632);">Move XY: G1 F60000 X442.5300 Y439.6930</div>
<div style="left:512.50px;top:639.53px;font-size:11px;line-height:13.20px;color:#000;font-weight:400;white-space:nowrap;transform-origin:0 0;transform:scaleX(0.9705);">Move Z: G1 F15000 Z36.8190</div>
<div style="left:512.50px;top:652.53px;font-size:11px;line-height:13.20px;color:#000;font-weight:400;white-space:nowrap;transform-origin:0 0;transform:scaleX(0.9705);">Move Z: G1 F15000 Z10.0000</div>
<div style="left:512.50px;top:665.53px;font-size:11px;line-height:13.20px;color:#000;font-weight:400;white-space:nowrap;transform-origin:0 0;transform:scaleX(0.9632);">Move XY: G1 F60000 X468.8420 Y138.1780</div>
<div style="left:512.50px;top:678.53px;font-size:11px;line-height:13.20px;color:#000;font-weight:400;white-space:nowrap;transform-origin:0 0;transform:scaleX(0.9705);">Move Z: G1 F15000 Z44.5870</div>
<div style="left:512.50px;top:691.53px;font-size:11px;line-height:13.20px;color:#000;font-weight:400;white-space:nowrap;transform-origin:0 0;transform:scaleX(0.9705);">Move Z: G1 F15000 Z30.0000</div>
<div style="left:512.50px;top:704.53px;font-size:11px;line-height:13.20px;color:#000;font-weight:400;white-space:nowrap;transform-origin:0 0;transform:scaleX(0.9867);">OutMediaList index: 61</div>
<div style="left:512.50px;top:717.53px;font-size:11px;line-height:13.20px;color:#000;font-weight:400;white-space:nowrap;transform-origin:0 0;transform:scaleX(0.9668);">Move XY: G1 F60000 X144.7260 Y112.6770</div>
<div style="left:512.50px;top:730.53px;font-size:11px;line-height:13.20px;color:#000;font-weight:400;white-space:nowrap;transform-origin:0 0;transform:scaleX(0.9705);">Move Z: G1 F15000 Z45.3620</div>
<div style="left:512.50px;top:743.53px;font-size:11px;line-height:13.20px;color:#000;font-weight:400;white-space:nowrap;transform-origin:0 0;transform:scaleX(0.9705);">Move Z: G1 F15000 Z30.0000</div>
<div style="left:512.50px;top:756.53px;font-size:11px;line-height:13.20px;color:#000;font-weight:400;white-space:nowrap;transform-origin:0 0;transform:scaleX(0.9655);">Move XYZ: G1 F60000 X324.2000 Y240.7000 Z0.0000</div>
<div style="left:996px;top:626px;width:17px;height:164px;background:#f0f0f0"></div>
<svg style="position:absolute;left:999px;top:630px;" width="11" height="8" viewBox="0 0 11 8"><path d="M1.5 6 L5.5 2 L9.5 6" fill="none" stroke="#606060" stroke-width="1.3"/></svg>
<svg style="position:absolute;left:999px;top:777px;" width="11" height="8" viewBox="0 0 11 8"><path d="M1.5 2 L5.5 6 L9.5 2" fill="none" stroke="#606060" stroke-width="1.3"/></svg>
<div style="left:997px;top:756px;width:15px;height:17px;background:#cdcdcd"></div>
<div style="left:1px;top:814px;width:150px;height:22px;border-top:1px solid #a0a0a0;border-left:1px solid #a0a0a0;border-right:1px solid #fff;border-bottom:1px solid #fff;box-sizing:border-box"></div>
<div style="left:3.00px;top:817.94px;font-size:12.5px;line-height:15.00px;color:#000;font-weight:400;white-space:nowrap;transform-origin:0 0;transform:scaleX(0.9374);">Status: Run Programming</div>
<div style="left:153px;top:814px;width:499px;height:22px;border-top:1px solid #a0a0a0;border-left:1px solid #a0a0a0;border-right:1px solid #fff;border-bottom:1px solid #fff;box-sizing:border-box"></div>
<div style="left:155.00px;top:817.94px;font-size:12.5px;line-height:15.00px;color:#000;font-weight:400;white-space:nowrap;transform-origin:0 0;transform:scaleX(0.9348);">Executing Main Sequence for Site #2 ..</div>
<div style="left:653px;top:814px;width:199px;height:22px;border-top:1px solid #a0a0a0;border-left:1px solid #a0a0a0;border-right:1px solid #fff;border-bottom:1px solid #fff;box-sizing:border-box"></div>
<div style="left:655.00px;top:817.94px;font-size:12.5px;line-height:15.00px;color:#000;font-weight:400;white-space:nowrap;transform-origin:0 0;transform:scaleX(0.9574);">Machine model: AutoBee-322</div>
<div style="left:853px;top:814px;width:181px;height:22px;border-top:1px solid #a0a0a0;border-left:1px solid #a0a0a0;border-right:1px solid #fff;border-bottom:1px solid #fff;box-sizing:border-box"></div>
<div style="left:855.00px;top:817.94px;font-size:12.5px;line-height:15.00px;color:#000;font-weight:400;white-space:nowrap;transform-origin:0 0;transform:scaleX(0.9377);">Operator ID: Manager</div>
</body></html>
